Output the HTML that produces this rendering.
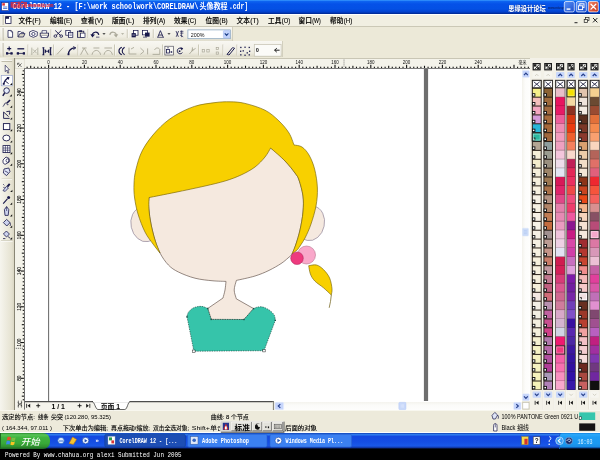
<!DOCTYPE html>
<html lang="zh-CN">
<head>
<meta charset="utf-8">
<title>CorelDRAW 12 - [F:\work schoolwork\CORELDRAW\头像教程.cdr]</title>
<style>
html,body{margin:0;padding:0;background:#000;}
body{width:600px;height:460px;overflow:hidden;position:relative;font-family:'Liberation Sans','Noto Sans CJK SC',sans-serif;}
#screen{position:absolute;left:0;top:0;width:600px;height:460px;overflow:hidden;background:#ECE9D8;}
#screen div{position:absolute;box-sizing:border-box;}
svg{display:block;overflow:hidden;will-change:transform;}
svg text{font-family:'Liberation Sans','Noto Sans CJK SC',sans-serif;}
svg text.mono{font-family:'Liberation Mono','Noto Sans CJK SC',monospace;}
#titlebar{left:0;top:0;width:600px;height:13.5px;background:linear-gradient(#3a9cff 0,#0d62f0 1.5px,#0551e8 4px,#0450e4 9px,#0340cc 12px,#002c9c 13.5px);}
#menubar{left:0;top:13.5px;width:600px;height:13.5px;background:#f1efe2;border-top:1px solid #fff;border-bottom:1px solid #cbc8b6;}
#tb1{left:0;top:27px;width:600px;height:14.3px;background:#ece9d8;}
#tb1 .bar{left:0;top:0;width:233.4px;height:14.3px;background:linear-gradient(#f8f7f2,#efede2 70%,#e0ddcc);border-right:1px solid #d2cfbd;}
#tb2{left:0;top:41.3px;width:600px;height:16.7px;background:#ece9d8;}
#tb2 .bar{left:0;top:0;width:283px;height:16px;background:linear-gradient(#f8f7f2,#efede2 70%,#dcd9c7);border-right:1px solid #d2cfbd;}
#toolbox{left:0;top:58px;width:15px;height:352px;background:linear-gradient(90deg,#f6f5ee,#e6e3d2 75%,#d6d2bf);}
#rulerh{left:15px;top:58px;width:515px;height:11px;background:#f4f3ea;border-top:1px solid #c9c6b5;}
#rulerv{left:15px;top:69px;width:10px;height:341px;background:#f4f3ea;}
#canvas{left:25px;top:69px;width:497px;height:332.5px;background:#fff;}
#vscroll{left:522px;top:69px;width:8px;height:332px;background:linear-gradient(90deg,#f3f2ec,#fcfcfa 40%,#fefefd);}
#pagenav{left:25px;top:401.5px;width:250px;height:8.5px;background:#f4f3ec;}
#hscroll{left:275px;top:401.5px;width:247px;height:8.5px;background:linear-gradient(#f4f3ee,#fbfbf9 40%,#fdfdfc);}
#palette{left:530px;top:58px;width:70px;height:352px;background:#f3f1e8;}
#status{left:0;top:410px;width:600px;height:23.3px;background:#edeadb;border-bottom:1px solid #fbfdfd;}
#taskbar{left:0;top:433.3px;width:600px;height:15.7px;background:linear-gradient(#0f3fb2 0,#2f7df0 1.6px,#1449e0 3.5px,#154ee3 9px,#1a58e8 13px,#0e2f92 15px,#040818 15.7px);}
#tray{left:558.5px;top:0;width:41.5px;height:15.7px;background:linear-gradient(#1282dc 0,#2aa8fa 1.6px,#1d9cf4 4px,#1b98f0 11px,#1a8ee6 13.5px,#0a4a9a 15px,#040818 15.7px);border-left:1px solid #1560c0;border-radius:3px 0 0 0;}
#start{left:0;top:0;width:49.5px;height:15.7px;background:linear-gradient(#2c8a30 0,#58c458 1.8px,#40b440 4.5px,#38a838 10.5px,#2f922f 13.5px,#1f6a24 15.7px);border-radius:0 7px 7px 0;border-left:1px solid #1f6a24;}
#footer{left:0;top:449px;width:600px;height:11px;background:#000;}
#overlay{left:0;top:0;width:600px;height:460px;}
</style>
</head>
<body>
<div id="screen">

<div id="titlebar"></div>
<div id="menubar"></div>
<div id="tb1"><div class="bar"></div></div>
<div id="tb2"><div class="bar"></div></div>
<div id="toolbox"></div>
<div id="rulerh"></div>
<div id="rulerv"></div>
<div id="canvas"></div>
<div id="vscroll"></div>
<div id="pagenav"></div>
<div id="hscroll"></div>
<div id="palette"></div>
<div id="status"></div>
<div id="taskbar"><div id="start"></div><div id="tray"></div></div>
<div id="footer"></div>
<svg class="title" style="position:absolute;left:0px;top:0px" width="600" height="14" viewBox="0 0 600 14">
<rect x="1.6" y="2.6" width="7" height="8" fill="#fff" stroke="#1a2a80" stroke-width="0.6"/><rect x="2.3" y="3.2" width="2.6" height="2.4" fill="#d33"/><rect x="3.1" y="6.6" width="4.2" height="0.8" fill="#3a6ad0"/><rect x="3.1" y="8.2" width="4.2" height="0.8" fill="#3a6ad0"/>
<text x="12.4" y="9.4" font-size="8.2" fill="#fff" textLength="186" lengthAdjust="spacingAndGlyphs" font-weight="bold" class="mono">CorelDRAW 12 - [F:\work schoolwork\CORELDRAW\</text>
<text x="199.4" y="9.4" font-size="7.6" fill="#fff" textLength="28.2" lengthAdjust="spacingAndGlyphs" font-weight="bold" class="mono">头像教程</text>
<text x="229" y="9.4" font-size="8.2" fill="#fff" textLength="19" lengthAdjust="spacingAndGlyphs" font-weight="bold" class="mono">.cdr]</text>
<text x="10.5" y="6.6" font-size="6" fill="#f0282c" textLength="43" lengthAdjust="spacingAndGlyphs" font-weight="900" stroke="#f0282c" stroke-width="0.2" opacity="0.92">网页教学网 www.webjx.com</text>
<text x="508.3" y="10.5" font-size="7" fill="#eef3ff" textLength="37.5" lengthAdjust="spacingAndGlyphs" font-weight="900" stroke="#0a2f8c" stroke-width="0.45" paint-order="stroke">思缘设计论坛</text>
<text x="548" y="9.2" font-size="3.6" fill="#0a2470" textLength="27" lengthAdjust="spacingAndGlyphs" font-weight="bold">www.missyuan.com</text>
<defs><linearGradient id="gb" x1="0" y1="0" x2="1" y2="1"><stop offset="0" stop-color="#5c94f6"/><stop offset="1" stop-color="#1c4fd0"/></linearGradient><linearGradient id="gr" x1="0" y1="0" x2="1" y2="1"><stop offset="0" stop-color="#f08a6a"/><stop offset="1" stop-color="#c8321a"/></linearGradient></defs>
<rect x="564.3" y="1.5" width="10" height="10.4" rx="1.6" fill="url(#gb)" stroke="#fff" stroke-width="0.7"/>
<rect x="566.6" y="8.4" width="3.8" height="1.4" fill="#fff"/>
<rect x="576.3" y="1.5" width="10" height="10.4" rx="1.6" fill="url(#gb)" stroke="#fff" stroke-width="0.7"/>
<rect x="579.8" y="3.8" width="4.2" height="3.8" fill="none" stroke="#fff" stroke-width="0.9"/><rect x="578.4" y="5.8" width="4.2" height="3.8" fill="#2a5fd8" stroke="#fff" stroke-width="0.9"/>
<rect x="588.3" y="1.5" width="10" height="10.4" rx="1.6" fill="url(#gr)" stroke="#fff" stroke-width="0.7"/>
<path d="M591 4.3 L595.8 9.1 M595.8 4.3 L591 9.1" stroke="#fff" stroke-width="1.3" stroke-linecap="round"/>
</svg>
<svg class="menu" style="position:absolute;left:0px;top:13px" width="600" height="14" viewBox="0 13 600 14">
<rect x="1.8" y="15.0" width="0.8" height="10.0" fill="#fff"/><rect x="2.6" y="15.0" width="0.9" height="10.0" fill="#b3b09d"/>
<rect x="5.6" y="16.6" width="5.4" height="6.8" fill="#fff" stroke="#1b1b4a" stroke-width="0.8"/><rect x="5.6" y="16.6" width="3.4" height="2.2" fill="#1b1b4a"/>
<text x="18.5" y="22.8" font-size="7.2" fill="#000" textLength="13.4" lengthAdjust="spacingAndGlyphs" font-weight="500" stroke="#000" stroke-width="0.15">文件</text>
<text x="32.3" y="22.6" font-size="6.4" fill="#000" textLength="8.4" lengthAdjust="spacingAndGlyphs" stroke="#000" stroke-width="0.12">(F)</text>
<text x="50" y="22.8" font-size="7.2" fill="#000" textLength="13.4" lengthAdjust="spacingAndGlyphs" font-weight="500" stroke="#000" stroke-width="0.15">编辑</text>
<text x="63.8" y="22.6" font-size="6.4" fill="#000" textLength="8.4" lengthAdjust="spacingAndGlyphs" stroke="#000" stroke-width="0.12">(E)</text>
<text x="81" y="22.8" font-size="7.2" fill="#000" textLength="13.4" lengthAdjust="spacingAndGlyphs" font-weight="500" stroke="#000" stroke-width="0.15">查看</text>
<text x="94.8" y="22.6" font-size="6.4" fill="#000" textLength="8.4" lengthAdjust="spacingAndGlyphs" stroke="#000" stroke-width="0.12">(V)</text>
<text x="112" y="22.8" font-size="7.2" fill="#000" textLength="13.4" lengthAdjust="spacingAndGlyphs" font-weight="500" stroke="#000" stroke-width="0.15">版面</text>
<text x="125.8" y="22.6" font-size="6.4" fill="#000" textLength="8.4" lengthAdjust="spacingAndGlyphs" stroke="#000" stroke-width="0.12">(L)</text>
<text x="143" y="22.8" font-size="7.2" fill="#000" textLength="13.4" lengthAdjust="spacingAndGlyphs" font-weight="500" stroke="#000" stroke-width="0.15">排列</text>
<text x="156.8" y="22.6" font-size="6.4" fill="#000" textLength="8.4" lengthAdjust="spacingAndGlyphs" stroke="#000" stroke-width="0.12">(A)</text>
<text x="174" y="22.8" font-size="7.2" fill="#000" textLength="13.4" lengthAdjust="spacingAndGlyphs" font-weight="500" stroke="#000" stroke-width="0.15">效果</text>
<text x="187.8" y="22.6" font-size="6.4" fill="#000" textLength="8.4" lengthAdjust="spacingAndGlyphs" stroke="#000" stroke-width="0.12">(C)</text>
<text x="205.5" y="22.8" font-size="7.2" fill="#000" textLength="13.4" lengthAdjust="spacingAndGlyphs" font-weight="500" stroke="#000" stroke-width="0.15">位图</text>
<text x="219.3" y="22.6" font-size="6.4" fill="#000" textLength="8.4" lengthAdjust="spacingAndGlyphs" stroke="#000" stroke-width="0.12">(B)</text>
<text x="236.5" y="22.8" font-size="7.2" fill="#000" textLength="13.4" lengthAdjust="spacingAndGlyphs" font-weight="500" stroke="#000" stroke-width="0.15">文本</text>
<text x="250.3" y="22.6" font-size="6.4" fill="#000" textLength="8.4" lengthAdjust="spacingAndGlyphs" stroke="#000" stroke-width="0.12">(T)</text>
<text x="268" y="22.8" font-size="7.2" fill="#000" textLength="13.4" lengthAdjust="spacingAndGlyphs" font-weight="500" stroke="#000" stroke-width="0.15">工具</text>
<text x="281.8" y="22.6" font-size="6.4" fill="#000" textLength="8.4" lengthAdjust="spacingAndGlyphs" stroke="#000" stroke-width="0.12">(O)</text>
<text x="298.5" y="22.8" font-size="7.2" fill="#000" textLength="13.4" lengthAdjust="spacingAndGlyphs" font-weight="500" stroke="#000" stroke-width="0.15">窗口</text>
<text x="312.3" y="22.6" font-size="6.4" fill="#000" textLength="8.4" lengthAdjust="spacingAndGlyphs" stroke="#000" stroke-width="0.12">(W)</text>
<text x="330" y="22.8" font-size="7.2" fill="#000" textLength="13.4" lengthAdjust="spacingAndGlyphs" font-weight="500" stroke="#000" stroke-width="0.15">帮助</text>
<text x="343.8" y="22.6" font-size="6.4" fill="#000" textLength="8.4" lengthAdjust="spacingAndGlyphs" stroke="#000" stroke-width="0.12">(H)</text>
<rect x="574.5" y="22.2" width="3" height="1" fill="#222"/>
<rect x="585.6" y="17.6" width="3.4" height="3" fill="none" stroke="#222" stroke-width="0.7"/><rect x="584.2" y="19.4" width="3.4" height="3" fill="#f1efe2" stroke="#222" stroke-width="0.7"/>
<path d="M593 18 L597.4 22.4 M597.4 18 L593 22.4" stroke="#222" stroke-width="1"/>
</svg>
<svg class="tb1" style="position:absolute;left:0px;top:27px" width="600" height="14" viewBox="0 27 600 14">
<rect x="1.8" y="28.0" width="0.8" height="12.5" fill="#fff"/><rect x="2.6" y="28.0" width="0.9" height="12.5" fill="#b3b09d"/>
<g transform="translate(0 33.9) scale(1 0.88) translate(0 -34.3)">
<path d="M8 30.4 H11 L12.6 32 V38.2 H8 Z" fill="#fff" stroke="#17174a" stroke-width="0.8"/><path d="M11 30.4 V32 H12.6" fill="none" stroke="#17174a" stroke-width="0.6"/>
<path d="M18 37.8 V31.6 H20.4 L21.2 32.6 H23.6 V34" fill="#fff" stroke="#17174a" stroke-width="0.8"/><path d="M18 37.8 L19.8 34 H25 L23.4 37.8 Z" fill="#d9d6c6" stroke="#17174a" stroke-width="0.8"/>
<path d="M29.6 32 L33 30.4 L37.4 32.2 L37.2 36.4 L33.4 38.2 L29.6 36.4 Z" fill="#fff" stroke="#17174a" stroke-width="0.8"/><circle cx="33.4" cy="34.4" r="1.7" fill="none" stroke="#17174a" stroke-width="0.8"/>
<path d="M42 33.4 V30.6 H46.6 V33.4" fill="#fff" stroke="#17174a" stroke-width="0.7"/><rect x="40.2" y="33.4" width="8.4" height="3.4" fill="#e8e6da" stroke="#17174a" stroke-width="0.8"/><path d="M41.6 36.8 L41 38.4 H47.8 L47.2 36.8" fill="#fff" stroke="#17174a" stroke-width="0.7"/>
<rect x="50.5" y="29" width="1" height="10" fill="#c5c2b0"/><rect x="51.5" y="29" width="0.6" height="10" fill="#fff"/>
<path d="M55.2 30.4 L60.4 36 M61.4 30.4 L56.2 36" stroke="#17174a" stroke-width="1"/><circle cx="55.4" cy="36.8" r="1.4" fill="none" stroke="#17174a" stroke-width="0.9"/><circle cx="61.2" cy="36.8" r="1.4" fill="none" stroke="#17174a" stroke-width="0.9"/>
<rect x="65.8" y="30.4" width="4.4" height="5.4" fill="#fff" stroke="#17174a" stroke-width="0.8"/><rect x="68.4" y="32.6" width="4.4" height="5.6" fill="#fff" stroke="#17174a" stroke-width="0.8"/><path d="M69.4 34.4 H71.8 M69.4 36 H71.8" stroke="#17174a" stroke-width="0.5"/>
<rect x="77.4" y="31.2" width="6.4" height="7" fill="#d9d6c6" stroke="#17174a" stroke-width="0.8"/><rect x="79.2" y="30.2" width="2.8" height="1.8" fill="#17174a"/><rect x="80.4" y="33.4" width="4.6" height="4.8" fill="#fff" stroke="#17174a" stroke-width="0.7"/>
<rect x="87.5" y="29" width="1" height="10" fill="#c5c2b0"/><rect x="88.5" y="29" width="0.6" height="10" fill="#fff"/>
<path d="M92.2 36.6 C92 32 97.6 30.4 98.8 35.4" fill="none" stroke="#17174a" stroke-width="1.2"/><path d="M90.4 34.6 L92.4 38.4 L95 35 Z" fill="#17174a"/><path d="M96 38 H99.4" stroke="#17174a" stroke-width="0.7"/>
<path d="M102.4 33.6 L105.6 33.6 L104 35.4 Z" fill="#222"/>
<path d="M116.4 36.6 C116.6 32 111 30.4 109.8 35.4" fill="none" stroke="#aaa899" stroke-width="1.2"/><path d="M118.2 34.6 L116.2 38.4 L113.6 35 Z" fill="#aaa899"/>
<path d="M121.0 33.6 L124.19999999999999 33.6 L122.6 35.4 Z" fill="#aaa899"/>
<rect x="126.8" y="29" width="1" height="10" fill="#c5c2b0"/><rect x="127.8" y="29" width="0.6" height="10" fill="#fff"/>
<rect x="133.4" y="30.4" width="4.6" height="5.4" fill="#fff" stroke="#17174a" stroke-width="0.8"/><rect x="131.6" y="33.4" width="4.2" height="4.8" fill="#17174a"/><path d="M132.4 35.6 H135" stroke="#fff" stroke-width="0.6"/>
<rect x="142.4" y="30.6" width="5" height="4.8" fill="#fff" stroke="#17174a" stroke-width="0.8"/><rect x="145" y="32.8" width="4.6" height="4.6" fill="#17174a"/><path d="M143 38 H147" stroke="#17174a" stroke-width="0.7"/>
<rect x="152.8" y="29" width="1" height="10" fill="#c5c2b0"/><rect x="153.8" y="29" width="0.6" height="10" fill="#fff"/>
<path d="M157.8 38 L160.4 30.6 L163.2 38 M158.8 35.6 H162.2" fill="none" stroke="#17174a" stroke-width="0.9"/><path d="M157.2 38.2 H164" stroke="#17174a" stroke-width="0.7"/>
<path d="M167.4 33.6 L170.6 33.6 L169 35.4 Z" fill="#222"/>
<path d="M176 31 L178.4 37.6 M178.6 31 L176.2 37.6" stroke="#17174a" stroke-width="0.8"/><path d="M180 31.4 H183.4 M180 33.4 H183.4 M181.6 30.4 V38 M180 35.6 L183.2 37.6" stroke="#17174a" stroke-width="0.7" fill="none"/>
</g>
<rect x="187.9" y="29.9" width="42.4" height="8.8" fill="#fff" stroke="#7f9db9" stroke-width="0.7"/>
<text x="190.8" y="36.6" font-size="5.8" fill="#111" textLength="13.6" lengthAdjust="spacingAndGlyphs">200%</text>
<rect x="223.4" y="30.6" width="6.4" height="7.4" rx="0.8" fill="#c3d3fb" stroke="#9db4ee" stroke-width="0.5"/><path d="M224.8 33.4 L226.6 35.4 L228.4 33.4" fill="none" stroke="#1d3f8a" stroke-width="1.1"/>
</svg>
<svg class="tb2" style="position:absolute;left:0px;top:41px" width="600" height="17" viewBox="0 41 600 17">
<rect x="1.8" y="43.0" width="0.8" height="13.5" fill="#fff"/><rect x="2.6" y="43.0" width="0.9" height="13.5" fill="#b3b09d"/>
<path d="M9.2 46.6 V50.6 M7.2 48.6 H11.2" stroke="#17174a" stroke-width="1.1"/><path d="M6 53.4 H12.6" stroke="#17174a" stroke-width="0.8"/><rect x="6" y="52.2" width="2.2" height="2.4" fill="#17174a"/><rect x="10.4" y="52.2" width="2.2" height="2.4" fill="#17174a"/>
<path d="M17.4 48.8 H24.2" stroke="#17174a" stroke-width="1.3"/><path d="M16.8 53.4 H25" stroke="#17174a" stroke-width="0.8"/><rect x="16.8" y="52.2" width="2.2" height="2.4" fill="#17174a"/><rect x="22.8" y="52.2" width="2.2" height="2.4" fill="#17174a"/>
<rect x="27.5" y="44.5" width="1" height="11.0" fill="#c5c2b0"/><rect x="28.5" y="44.5" width="0.6" height="11.0" fill="#fff"/>
<path d="M31.8 47.6 V55 M37.8 47.6 V55" stroke="#aaa899" stroke-width="0.8"/><path d="M33 49.4 L34.8 51.3 L33 53.2 M36.6 49.4 L34.8 51.3 L36.6 53.2" fill="none" stroke="#aaa899" stroke-width="0.8"/>
<path d="M43.4 47.6 V55 M50.6 47.6 V55" stroke="#17174a" stroke-width="1.1"/><path d="M44.6 48.8 L47 51.3 L44.6 53.8 Z M49.4 48.8 L47 51.3 L49.4 53.8 Z" fill="#17174a"/><path d="M42.4 47.8 H44.4 M49.6 47.8 H51.6 M42.4 54.8 H44.4 M49.6 54.8 H51.6" stroke="#17174a" stroke-width="0.9"/>
<rect x="53.2" y="44.5" width="1" height="11.0" fill="#c5c2b0"/><rect x="54.2" y="44.5" width="0.6" height="11.0" fill="#fff"/>
<path d="M57 54.4 L63.2 47.6" stroke="#aaa899" stroke-width="0.9"/>
<path d="M68.4 54.6 C68.6 50 71 48 75 47.8" fill="none" stroke="#17174a" stroke-width="1.3"/><path d="M73 46.6 L76 47.8 L73.4 49.6" fill="none" stroke="#17174a" stroke-width="0.8"/><rect x="67.6" y="53.4" width="1.8" height="1.8" fill="#17174a"/>
<rect x="77.5" y="44.5" width="1" height="11.0" fill="#c5c2b0"/><rect x="78.5" y="44.5" width="0.6" height="11.0" fill="#fff"/>
<path d="M80.6 54.8 L84.2 48 L88 54.8 M82 48 L84.2 48 L86.6 48" fill="none" stroke="#aaa899" stroke-width="0.9"/>
<path d="M92 54.8 C93 49 99.6 49 100.6 54.8 M93.4 48 H99.4" fill="none" stroke="#aaa899" stroke-width="0.9"/>
<path d="M104 54.8 C105 49 111.4 49 112.4 54.8 M104.4 48 H112" fill="none" stroke="#aaa899" stroke-width="0.9"/>
<rect x="114.1" y="44.5" width="1" height="11.0" fill="#c5c2b0"/><rect x="115.1" y="44.5" width="0.6" height="11.0" fill="#fff"/>
<path d="M121.8 47.2 C118 48.6 118 53.2 121.8 54.8 M124.6 47.2 C121.4 49 121.4 53 124.6 54.8" fill="none" stroke="#17174a" stroke-width="1.1"/>
<path d="M129 47.6 V54 H136.4 M131 49 L134 47.4" fill="none" stroke="#aaa899" stroke-width="0.9"/>
<path d="M140.4 48 L144 51.4 L140.4 54.4 M147.6 48.4 V54.4" fill="none" stroke="#aaa899" stroke-width="0.9"/>
<path d="M152.6 54.4 H159.8 V49.4 C158.4 47.2 155.4 47.6 154.6 50" fill="none" stroke="#aaa899" stroke-width="0.9"/>
<rect x="162.2" y="44.5" width="1" height="11.0" fill="#c5c2b0"/><rect x="163.2" y="44.5" width="0.6" height="11.0" fill="#fff"/>
<rect x="164.9" y="46.2" width="8.6" height="8.8" fill="#f8f7f2" stroke="#3a3a4a" stroke-width="0.6"/><rect x="166.4" y="49.6" width="3" height="3.4" fill="none" stroke="#17174a" stroke-width="0.8"/><path d="M167.2 47.8 H168.8 M170.4 52 H172.4 M171.4 51 V53" stroke="#17174a" stroke-width="0.7"/>
<path d="M181.8 49 C179.6 47 176.8 49 177.4 51.6 C178 54 181 54.4 182.4 52.6" fill="none" stroke="#17174a" stroke-width="1"/><path d="M180.4 47 L183.2 48.2 L181.6 50.6 Z" fill="#17174a"/><rect x="178.8" y="50.4" width="1.6" height="1.6" fill="#17174a"/>
<path d="M189.4 54 L192.4 50.4 L195.6 48.4 M192.4 50.4 V47.4" fill="none" stroke="#aaa899" stroke-width="0.9"/><rect x="191.6" y="49.6" width="1.6" height="1.6" fill="#aaa899"/>
<rect x="198.2" y="44.5" width="1" height="11.0" fill="#c5c2b0"/><rect x="199.2" y="44.5" width="0.6" height="11.0" fill="#fff"/>
<rect x="202.2" y="49.6" width="2.4" height="2.4" fill="none" stroke="#aaa899" stroke-width="0.7"/><rect x="206.8" y="49.6" width="2.4" height="2.4" fill="none" stroke="#aaa899" stroke-width="0.7"/>
<rect x="216.2" y="47.4" width="2.2" height="2.2" fill="none" stroke="#aaa899" stroke-width="0.7"/><rect x="216.2" y="52" width="2.2" height="2.2" fill="none" stroke="#aaa899" stroke-width="0.7"/>
<rect x="222.5" y="44.5" width="1" height="11.0" fill="#c5c2b0"/><rect x="223.5" y="44.5" width="0.6" height="11.0" fill="#fff"/>
<path d="M227 54.4 L232.6 47.6 M229 55 L234.6 48.2" stroke="#17174a" stroke-width="1"/><path d="M227 54.4 L229 55 M232.6 47.6 L234.6 48.2" stroke="#17174a" stroke-width="0.8"/>
<rect x="236.5" y="44.5" width="1" height="11.0" fill="#c5c2b0"/><rect x="237.5" y="44.5" width="0.6" height="11.0" fill="#fff"/>
<rect x="240.2" y="46.8" width="1.3" height="1.3" fill="#17174a"/>
<rect x="244.4" y="46.6" width="1.3" height="1.3" fill="#17174a"/>
<rect x="248.6" y="46.8" width="1.3" height="1.3" fill="#17174a"/>
<rect x="240" y="50.6" width="1.3" height="1.3" fill="#17174a"/>
<rect x="249" y="50.6" width="1.3" height="1.3" fill="#17174a"/>
<rect x="242.6" y="50.2" width="1.3" height="1.3" fill="#17174a"/>
<rect x="246.6" y="52.2" width="1.3" height="1.3" fill="#17174a"/>
<rect x="240.2" y="54.2" width="1.3" height="1.3" fill="#17174a"/>
<rect x="244.4" y="54.6" width="1.3" height="1.3" fill="#17174a"/>
<rect x="248.6" y="54.2" width="1.3" height="1.3" fill="#17174a"/>
<rect x="254.3" y="44.6" width="26.8" height="11.6" fill="#fbfbf8" stroke="#c4c1b0" stroke-width="0.7"/>
<text x="255.8" y="52.3" font-size="5.6" fill="#111" font-weight="bold">0</text>
<path d="M274.6 50.2 H279.6 M274.6 50.2 L276.8 48.2 M274.6 50.2 L276.8 52.2" stroke="#222" stroke-width="1" fill="none"/>
</svg>
<svg class="toolbox" style="position:absolute;left:0px;top:58px" width="15" height="352" viewBox="0 58 15 352">
<rect x="14" y="58" width="0.9" height="352" fill="#807d6d"/>
<rect x="1.5" y="60.4" width="10.6" height="0.8" fill="#fff"/><rect x="1.5" y="61.2" width="10.6" height="0.8" fill="#b3b09d"/>
<path d="M5.2 65.2 L5.2 71.6 L6.7 70.3 L7.8 73.2 L8.8 72.8 L7.7 70 L9.4 69.8 Z" fill="#fff" stroke="#17174a" stroke-width="0.65"/>
<rect x="1.2" y="75.6" width="11.4" height="10.2" fill="#fff" stroke="#8a98c8" stroke-width="0.6"/>
<path d="M3.6 84.2 C4.4 80.6 6.2 78.8 8.8 77.6" fill="none" stroke="#17174a" stroke-width="1.2"/><path d="M6.6 77 L9.6 77.2 L8.4 80 Z" fill="#17174a"/><path d="M5.2 81 L8.6 83.6" stroke="#17174a" stroke-width="0.9"/><rect x="2.8" y="83" width="1.8" height="1.8" fill="#17174a"/>
<path d="M10.0 85 L12.200000000000001 85 L12.200000000000001 82.8 Z" fill="#111"/>
<circle cx="6.6" cy="90.6" r="2.8" fill="#e8eefc" stroke="#17174a" stroke-width="0.9"/><path d="M4.6 93 L2.8 95.8" stroke="#17174a" stroke-width="1.4"/>
<path d="M9.6 96.4 L11.8 96.4 L11.8 94.2 Z" fill="#111"/>
<path d="M3 106.6 C4.6 104.8 4.6 102.6 6.2 102.8 C7.6 103 6.4 105.6 8.4 104.6" fill="none" stroke="#17174a" stroke-width="0.8"/><path d="M6.4 102.4 L9.6 99.6 L10.6 100.6 L7.6 103.6 Z" fill="#17174a"/>
<path d="M10.0 107.8 L12.200000000000001 107.8 L12.200000000000001 105.6 Z" fill="#111"/>
<path d="M3.6 112 V118.4 H9.6 M3.6 112 L8.6 116.6" fill="none" stroke="#17174a" stroke-width="0.9"/><path d="M6.4 111.6 L10 111.2 L9.4 114.6" fill="none" stroke="#17174a" stroke-width="0.9"/>
<path d="M10.0 119.6 L12.200000000000001 119.6 L12.200000000000001 117.39999999999999 Z" fill="#111"/>
<rect x="3.4" y="123.6" width="6.4" height="6" fill="#fff" stroke="#17174a" stroke-width="0.9"/>
<path d="M10.0 131.2 L12.200000000000001 131.2 L12.200000000000001 129.0 Z" fill="#111"/>
<ellipse cx="6.4" cy="138" rx="3.6" ry="2.9" fill="#fff" stroke="#17174a" stroke-width="0.9"/>
<path d="M10.0 142.6 L12.200000000000001 142.6 L12.200000000000001 140.4 Z" fill="#111"/>
<rect x="3" y="145.6" width="7" height="7" fill="#fff" stroke="#17174a" stroke-width="0.8"/><path d="M3 148 H10 M3 150.2 H10 M5.4 145.6 V152.6 M7.6 145.6 V152.6" stroke="#17174a" stroke-width="0.6"/>
<path d="M10.0 154.2 L12.200000000000001 154.2 L12.200000000000001 152.0 Z" fill="#111"/>
<path d="M3 160 L6 157 L9 158.4 L8.6 162.4 L5 164.4 L3 162.8 Z" fill="#fff" stroke="#17174a" stroke-width="0.8"/><circle cx="7.8" cy="160.6" r="1.8" fill="none" stroke="#17174a" stroke-width="0.7"/>
<path d="M10.0 165.8 L12.200000000000001 165.8 L12.200000000000001 163.60000000000002 Z" fill="#111"/>
<path d="M4 169 L8.8 168 L10 171.6 L6.6 175.6 L3.4 173 Z" fill="#dfe4f6" stroke="#17174a" stroke-width="0.8"/><path d="M5 171 L8 172.6" stroke="#17174a" stroke-width="0.7"/>
<path d="M3 190.6 L6.4 186.4 L8.4 188 L5.2 191.4 Z" fill="#cdd3ee" stroke="#17174a" stroke-width="0.7"/><path d="M6.6 186 L9 183.2 L10.4 184.4 L8.2 187.2 Z" fill="#17174a"/><path d="M3 184 L4.4 185.4 M3.2 187.4 H4.8" stroke="#17174a" stroke-width="0.6"/>
<path d="M10.2 192 L12.4 192 L12.4 189.8 Z" fill="#111"/>
<path d="M3.2 203.6 L7.4 198.8" stroke="#17174a" stroke-width="1.1"/><circle cx="8.6" cy="197.4" r="1.5" fill="#17174a"/>
<path d="M10.0 204.8 L12.200000000000001 204.8 L12.200000000000001 202.60000000000002 Z" fill="#111"/>
<path d="M5 215.4 L4.4 209.6 L6.6 206.6 L8.8 209.6 L8.2 215.4 Z" fill="#cdd3ee" stroke="#17174a" stroke-width="0.8"/><path d="M6.6 206.6 V211" stroke="#17174a" stroke-width="0.6"/>
<path d="M10.0 216.4 L12.200000000000001 216.4 L12.200000000000001 214.20000000000002 Z" fill="#111"/>
<path d="M3.4 222.6 L6.6 219.4 L10 222.6 L6.8 226 Z" fill="#cdd3ee" stroke="#17174a" stroke-width="0.8"/><path d="M10 222.6 C10.8 224 10.6 225.4 9.8 226" fill="none" stroke="#17174a" stroke-width="0.8"/>
<path d="M10.0 227.8 L12.200000000000001 227.8 L12.200000000000001 225.60000000000002 Z" fill="#111"/>
<path d="M3.4 234 L6.4 231 L9.4 234 L6.6 237 Z" fill="#cdd3ee" stroke="#17174a" stroke-width="0.8"/><path d="M8 236.6 L10.4 238.4 M3 238.6 H5.4" stroke="#17174a" stroke-width="0.8"/>
<path d="M10.0 239.4 L12.200000000000001 239.4 L12.200000000000001 237.20000000000002 Z" fill="#111"/>
<rect x="1" y="240.4" width="11.6" height="0.6" fill="#c9c6b4"/><rect x="1" y="241" width="11.6" height="0.6" fill="#fff"/><rect x="1.6" y="178.6" width="10.4" height="0.6" fill="#c9c6b4"/><rect x="1.6" y="179.2" width="10.4" height="0.6" fill="#fff"/>
</svg>
<svg class="rulerh" style="position:absolute;left:14px;top:58px" width="516" height="12" viewBox="14 58 516 12">
<rect x="15.2" y="59" width="9" height="9.4" fill="#f4f3ea" stroke="#d4d1c0" stroke-width="0.5"/>
<path d="M18 63.4 L21.6 67 M21.6 63.4 L18 67 M17.6 63.2 H19.4 M17.6 63.2 V65" stroke="#222" stroke-width="0.6" fill="none"/>
<rect x="24" y="68" width="506" height="0.9" fill="#707070"/>
<rect x="26.57" y="66.7" width="1.1" height="1.3" fill="#111"/>
<rect x="30.15" y="65.8" width="1.1" height="2.2" fill="#111"/>
<rect x="33.73" y="66.7" width="1.1" height="1.3" fill="#111"/>
<rect x="37.31" y="66.7" width="1.1" height="1.3" fill="#111"/>
<rect x="40.89" y="66.7" width="1.1" height="1.3" fill="#111"/>
<rect x="44.47" y="66.7" width="1.1" height="1.3" fill="#111"/>
<rect x="48.05" y="64.8" width="1.1" height="3.2" fill="#111"/>
<rect x="51.63" y="66.7" width="1.1" height="1.3" fill="#111"/>
<rect x="55.21" y="66.7" width="1.1" height="1.3" fill="#111"/>
<rect x="58.79" y="66.7" width="1.1" height="1.3" fill="#111"/>
<rect x="62.37" y="66.7" width="1.1" height="1.3" fill="#111"/>
<rect x="65.95" y="65.8" width="1.1" height="2.2" fill="#111"/>
<rect x="69.53" y="66.7" width="1.1" height="1.3" fill="#111"/>
<rect x="73.11" y="66.7" width="1.1" height="1.3" fill="#111"/>
<rect x="76.69" y="66.7" width="1.1" height="1.3" fill="#111"/>
<rect x="80.27" y="66.7" width="1.1" height="1.3" fill="#111"/>
<rect x="83.85" y="64.8" width="1.1" height="3.2" fill="#111"/>
<rect x="87.43" y="66.7" width="1.1" height="1.3" fill="#111"/>
<rect x="91.01" y="66.7" width="1.1" height="1.3" fill="#111"/>
<rect x="94.59" y="66.7" width="1.1" height="1.3" fill="#111"/>
<rect x="98.17" y="66.7" width="1.1" height="1.3" fill="#111"/>
<rect x="101.75" y="65.8" width="1.1" height="2.2" fill="#111"/>
<rect x="105.33" y="66.7" width="1.1" height="1.3" fill="#111"/>
<rect x="108.91" y="66.7" width="1.1" height="1.3" fill="#111"/>
<rect x="112.49" y="66.7" width="1.1" height="1.3" fill="#111"/>
<rect x="116.07" y="66.7" width="1.1" height="1.3" fill="#111"/>
<rect x="119.65" y="64.8" width="1.1" height="3.2" fill="#111"/>
<rect x="123.23" y="66.7" width="1.1" height="1.3" fill="#111"/>
<rect x="126.81" y="66.7" width="1.1" height="1.3" fill="#111"/>
<rect x="130.39" y="66.7" width="1.1" height="1.3" fill="#111"/>
<rect x="133.97" y="66.7" width="1.1" height="1.3" fill="#111"/>
<rect x="137.55" y="65.8" width="1.1" height="2.2" fill="#111"/>
<rect x="141.13" y="66.7" width="1.1" height="1.3" fill="#111"/>
<rect x="144.71" y="66.7" width="1.1" height="1.3" fill="#111"/>
<rect x="148.29" y="66.7" width="1.1" height="1.3" fill="#111"/>
<rect x="151.87" y="66.7" width="1.1" height="1.3" fill="#111"/>
<rect x="155.45" y="64.8" width="1.1" height="3.2" fill="#111"/>
<rect x="159.03" y="66.7" width="1.1" height="1.3" fill="#111"/>
<rect x="162.61" y="66.7" width="1.1" height="1.3" fill="#111"/>
<rect x="166.19" y="66.7" width="1.1" height="1.3" fill="#111"/>
<rect x="169.77" y="66.7" width="1.1" height="1.3" fill="#111"/>
<rect x="173.35" y="65.8" width="1.1" height="2.2" fill="#111"/>
<rect x="176.93" y="66.7" width="1.1" height="1.3" fill="#111"/>
<rect x="180.51" y="66.7" width="1.1" height="1.3" fill="#111"/>
<rect x="184.09" y="66.7" width="1.1" height="1.3" fill="#111"/>
<rect x="187.67" y="66.7" width="1.1" height="1.3" fill="#111"/>
<rect x="191.25" y="64.8" width="1.1" height="3.2" fill="#111"/>
<rect x="194.83" y="66.7" width="1.1" height="1.3" fill="#111"/>
<rect x="198.41" y="66.7" width="1.1" height="1.3" fill="#111"/>
<rect x="201.99" y="66.7" width="1.1" height="1.3" fill="#111"/>
<rect x="205.57" y="66.7" width="1.1" height="1.3" fill="#111"/>
<rect x="209.15" y="65.8" width="1.1" height="2.2" fill="#111"/>
<rect x="212.73" y="66.7" width="1.1" height="1.3" fill="#111"/>
<rect x="216.31" y="66.7" width="1.1" height="1.3" fill="#111"/>
<rect x="219.89" y="66.7" width="1.1" height="1.3" fill="#111"/>
<rect x="223.47" y="66.7" width="1.1" height="1.3" fill="#111"/>
<rect x="227.05" y="64.8" width="1.1" height="3.2" fill="#111"/>
<rect x="230.63" y="66.7" width="1.1" height="1.3" fill="#111"/>
<rect x="234.21" y="66.7" width="1.1" height="1.3" fill="#111"/>
<rect x="237.79" y="66.7" width="1.1" height="1.3" fill="#111"/>
<rect x="241.37" y="66.7" width="1.1" height="1.3" fill="#111"/>
<rect x="244.95" y="65.8" width="1.1" height="2.2" fill="#111"/>
<rect x="248.53" y="66.7" width="1.1" height="1.3" fill="#111"/>
<rect x="252.11" y="66.7" width="1.1" height="1.3" fill="#111"/>
<rect x="255.69" y="66.7" width="1.1" height="1.3" fill="#111"/>
<rect x="259.27" y="66.7" width="1.1" height="1.3" fill="#111"/>
<rect x="262.85" y="64.8" width="1.1" height="3.2" fill="#111"/>
<rect x="266.43" y="66.7" width="1.1" height="1.3" fill="#111"/>
<rect x="270.01" y="66.7" width="1.1" height="1.3" fill="#111"/>
<rect x="273.59" y="66.7" width="1.1" height="1.3" fill="#111"/>
<rect x="277.17" y="66.7" width="1.1" height="1.3" fill="#111"/>
<rect x="280.75" y="65.8" width="1.1" height="2.2" fill="#111"/>
<rect x="284.33" y="66.7" width="1.1" height="1.3" fill="#111"/>
<rect x="287.91" y="66.7" width="1.1" height="1.3" fill="#111"/>
<rect x="291.49" y="66.7" width="1.1" height="1.3" fill="#111"/>
<rect x="295.07" y="66.7" width="1.1" height="1.3" fill="#111"/>
<rect x="298.65" y="64.8" width="1.1" height="3.2" fill="#111"/>
<rect x="302.23" y="66.7" width="1.1" height="1.3" fill="#111"/>
<rect x="305.81" y="66.7" width="1.1" height="1.3" fill="#111"/>
<rect x="309.39" y="66.7" width="1.1" height="1.3" fill="#111"/>
<rect x="312.97" y="66.7" width="1.1" height="1.3" fill="#111"/>
<rect x="316.55" y="65.8" width="1.1" height="2.2" fill="#111"/>
<rect x="320.13" y="66.7" width="1.1" height="1.3" fill="#111"/>
<rect x="323.71" y="66.7" width="1.1" height="1.3" fill="#111"/>
<rect x="327.29" y="66.7" width="1.1" height="1.3" fill="#111"/>
<rect x="330.87" y="66.7" width="1.1" height="1.3" fill="#111"/>
<rect x="334.45" y="64.8" width="1.1" height="3.2" fill="#111"/>
<rect x="338.03" y="66.7" width="1.1" height="1.3" fill="#111"/>
<rect x="341.61" y="66.7" width="1.1" height="1.3" fill="#111"/>
<rect x="345.19" y="66.7" width="1.1" height="1.3" fill="#111"/>
<rect x="348.77" y="66.7" width="1.1" height="1.3" fill="#111"/>
<rect x="352.35" y="65.8" width="1.1" height="2.2" fill="#111"/>
<rect x="355.93" y="66.7" width="1.1" height="1.3" fill="#111"/>
<rect x="359.51" y="66.7" width="1.1" height="1.3" fill="#111"/>
<rect x="363.09" y="66.7" width="1.1" height="1.3" fill="#111"/>
<rect x="366.67" y="66.7" width="1.1" height="1.3" fill="#111"/>
<rect x="370.25" y="64.8" width="1.1" height="3.2" fill="#111"/>
<rect x="373.83" y="66.7" width="1.1" height="1.3" fill="#111"/>
<rect x="377.41" y="66.7" width="1.1" height="1.3" fill="#111"/>
<rect x="380.99" y="66.7" width="1.1" height="1.3" fill="#111"/>
<rect x="384.57" y="66.7" width="1.1" height="1.3" fill="#111"/>
<rect x="388.15" y="65.8" width="1.1" height="2.2" fill="#111"/>
<rect x="391.73" y="66.7" width="1.1" height="1.3" fill="#111"/>
<rect x="395.31" y="66.7" width="1.1" height="1.3" fill="#111"/>
<rect x="398.89" y="66.7" width="1.1" height="1.3" fill="#111"/>
<rect x="402.47" y="66.7" width="1.1" height="1.3" fill="#111"/>
<rect x="406.05" y="64.8" width="1.1" height="3.2" fill="#111"/>
<rect x="409.63" y="66.7" width="1.1" height="1.3" fill="#111"/>
<rect x="413.21" y="66.7" width="1.1" height="1.3" fill="#111"/>
<rect x="416.79" y="66.7" width="1.1" height="1.3" fill="#111"/>
<rect x="420.37" y="66.7" width="1.1" height="1.3" fill="#111"/>
<rect x="423.95" y="65.8" width="1.1" height="2.2" fill="#111"/>
<rect x="427.53" y="66.7" width="1.1" height="1.3" fill="#111"/>
<rect x="431.11" y="66.7" width="1.1" height="1.3" fill="#111"/>
<rect x="434.69" y="66.7" width="1.1" height="1.3" fill="#111"/>
<rect x="438.27" y="66.7" width="1.1" height="1.3" fill="#111"/>
<rect x="441.85" y="64.8" width="1.1" height="3.2" fill="#111"/>
<rect x="445.43" y="66.7" width="1.1" height="1.3" fill="#111"/>
<rect x="449.01" y="66.7" width="1.1" height="1.3" fill="#111"/>
<rect x="452.59" y="66.7" width="1.1" height="1.3" fill="#111"/>
<rect x="456.17" y="66.7" width="1.1" height="1.3" fill="#111"/>
<rect x="459.75" y="65.8" width="1.1" height="2.2" fill="#111"/>
<rect x="463.33" y="66.7" width="1.1" height="1.3" fill="#111"/>
<rect x="466.91" y="66.7" width="1.1" height="1.3" fill="#111"/>
<rect x="470.49" y="66.7" width="1.1" height="1.3" fill="#111"/>
<rect x="474.07" y="66.7" width="1.1" height="1.3" fill="#111"/>
<rect x="477.65" y="64.8" width="1.1" height="3.2" fill="#111"/>
<rect x="481.23" y="66.7" width="1.1" height="1.3" fill="#111"/>
<rect x="484.81" y="66.7" width="1.1" height="1.3" fill="#111"/>
<rect x="488.39" y="66.7" width="1.1" height="1.3" fill="#111"/>
<rect x="491.97" y="66.7" width="1.1" height="1.3" fill="#111"/>
<rect x="495.55" y="65.8" width="1.1" height="2.2" fill="#111"/>
<rect x="499.13" y="66.7" width="1.1" height="1.3" fill="#111"/>
<rect x="502.71" y="66.7" width="1.1" height="1.3" fill="#111"/>
<rect x="506.29" y="66.7" width="1.1" height="1.3" fill="#111"/>
<rect x="509.87" y="66.7" width="1.1" height="1.3" fill="#111"/>
<rect x="513.45" y="64.8" width="1.1" height="3.2" fill="#111"/>
<rect x="517.03" y="66.7" width="1.1" height="1.3" fill="#111"/>
<rect x="520.61" y="66.7" width="1.1" height="1.3" fill="#111"/>
<rect x="524.19" y="66.7" width="1.1" height="1.3" fill="#111"/>
<rect x="527.77" y="66.7" width="1.1" height="1.3" fill="#111"/>
<text x="48.6" y="64.2" font-size="4.5" fill="#111" text-anchor="middle">0</text>
<text x="84.4" y="64.2" font-size="4.5" fill="#111" text-anchor="middle">20</text>
<text x="120.2" y="64.2" font-size="4.5" fill="#111" text-anchor="middle">40</text>
<text x="156.0" y="64.2" font-size="4.5" fill="#111" text-anchor="middle">60</text>
<text x="191.8" y="64.2" font-size="4.5" fill="#111" text-anchor="middle">80</text>
<text x="227.6" y="64.2" font-size="4.5" fill="#111" text-anchor="middle">100</text>
<text x="263.4" y="64.2" font-size="4.5" fill="#111" text-anchor="middle">120</text>
<text x="299.2" y="64.2" font-size="4.5" fill="#111" text-anchor="middle">140</text>
<text x="335.0" y="64.2" font-size="4.5" fill="#111" text-anchor="middle">160</text>
<text x="370.8" y="64.2" font-size="4.5" fill="#111" text-anchor="middle">180</text>
<text x="406.6" y="64.2" font-size="4.5" fill="#111" text-anchor="middle">200</text>
<text x="442.4" y="64.2" font-size="4.5" fill="#111" text-anchor="middle">220</text>
<text x="478.2" y="64.2" font-size="4.5" fill="#111" text-anchor="middle">240</text>
<text x="518.6" y="63.9" font-size="4.2" fill="#111" textLength="8" lengthAdjust="spacingAndGlyphs">毫米</text>
<path d="M344 59.6 V67" stroke="#6e6e6e" stroke-width="0.9" stroke-dasharray="1 1"/>
</svg>
<svg class="rulerv" style="position:absolute;left:14px;top:69px" width="11" height="341" viewBox="14 69 11 341">
<rect x="24" y="68" width="0.9" height="341.6" fill="#606060"/>
<rect x="22.7" y="70.30" width="1.3" height="1.1" fill="#111"/>
<rect x="21.8" y="73.88" width="2.2" height="1.1" fill="#111"/>
<rect x="22.7" y="77.45" width="1.3" height="1.1" fill="#111"/>
<rect x="22.7" y="81.02" width="1.3" height="1.1" fill="#111"/>
<rect x="22.7" y="84.60" width="1.3" height="1.1" fill="#111"/>
<rect x="22.7" y="88.17" width="1.3" height="1.1" fill="#111"/>
<rect x="20.8" y="91.75" width="3.2" height="1.1" fill="#111"/>
<rect x="22.7" y="95.33" width="1.3" height="1.1" fill="#111"/>
<rect x="22.7" y="98.90" width="1.3" height="1.1" fill="#111"/>
<rect x="22.7" y="102.48" width="1.3" height="1.1" fill="#111"/>
<rect x="22.7" y="106.05" width="1.3" height="1.1" fill="#111"/>
<rect x="21.8" y="109.62" width="2.2" height="1.1" fill="#111"/>
<rect x="22.7" y="113.20" width="1.3" height="1.1" fill="#111"/>
<rect x="22.7" y="116.78" width="1.3" height="1.1" fill="#111"/>
<rect x="22.7" y="120.35" width="1.3" height="1.1" fill="#111"/>
<rect x="22.7" y="123.92" width="1.3" height="1.1" fill="#111"/>
<rect x="20.8" y="127.50" width="3.2" height="1.1" fill="#111"/>
<rect x="22.7" y="131.07" width="1.3" height="1.1" fill="#111"/>
<rect x="22.7" y="134.65" width="1.3" height="1.1" fill="#111"/>
<rect x="22.7" y="138.22" width="1.3" height="1.1" fill="#111"/>
<rect x="22.7" y="141.80" width="1.3" height="1.1" fill="#111"/>
<rect x="21.8" y="145.38" width="2.2" height="1.1" fill="#111"/>
<rect x="22.7" y="148.95" width="1.3" height="1.1" fill="#111"/>
<rect x="22.7" y="152.52" width="1.3" height="1.1" fill="#111"/>
<rect x="22.7" y="156.10" width="1.3" height="1.1" fill="#111"/>
<rect x="22.7" y="159.67" width="1.3" height="1.1" fill="#111"/>
<rect x="20.8" y="163.25" width="3.2" height="1.1" fill="#111"/>
<rect x="22.7" y="166.82" width="1.3" height="1.1" fill="#111"/>
<rect x="22.7" y="170.40" width="1.3" height="1.1" fill="#111"/>
<rect x="22.7" y="173.97" width="1.3" height="1.1" fill="#111"/>
<rect x="22.7" y="177.55" width="1.3" height="1.1" fill="#111"/>
<rect x="21.8" y="181.12" width="2.2" height="1.1" fill="#111"/>
<rect x="22.7" y="184.70" width="1.3" height="1.1" fill="#111"/>
<rect x="22.7" y="188.27" width="1.3" height="1.1" fill="#111"/>
<rect x="22.7" y="191.85" width="1.3" height="1.1" fill="#111"/>
<rect x="22.7" y="195.43" width="1.3" height="1.1" fill="#111"/>
<rect x="20.8" y="199.00" width="3.2" height="1.1" fill="#111"/>
<rect x="22.7" y="202.57" width="1.3" height="1.1" fill="#111"/>
<rect x="22.7" y="206.15" width="1.3" height="1.1" fill="#111"/>
<rect x="22.7" y="209.72" width="1.3" height="1.1" fill="#111"/>
<rect x="22.7" y="213.30" width="1.3" height="1.1" fill="#111"/>
<rect x="21.8" y="216.88" width="2.2" height="1.1" fill="#111"/>
<rect x="22.7" y="220.45" width="1.3" height="1.1" fill="#111"/>
<rect x="22.7" y="224.02" width="1.3" height="1.1" fill="#111"/>
<rect x="22.7" y="227.60" width="1.3" height="1.1" fill="#111"/>
<rect x="22.7" y="231.18" width="1.3" height="1.1" fill="#111"/>
<rect x="20.8" y="234.75" width="3.2" height="1.1" fill="#111"/>
<rect x="22.7" y="238.32" width="1.3" height="1.1" fill="#111"/>
<rect x="22.7" y="241.90" width="1.3" height="1.1" fill="#111"/>
<rect x="22.7" y="245.47" width="1.3" height="1.1" fill="#111"/>
<rect x="22.7" y="249.05" width="1.3" height="1.1" fill="#111"/>
<rect x="21.8" y="252.62" width="2.2" height="1.1" fill="#111"/>
<rect x="22.7" y="256.20" width="1.3" height="1.1" fill="#111"/>
<rect x="22.7" y="259.77" width="1.3" height="1.1" fill="#111"/>
<rect x="22.7" y="263.35" width="1.3" height="1.1" fill="#111"/>
<rect x="22.7" y="266.93" width="1.3" height="1.1" fill="#111"/>
<rect x="20.8" y="270.50" width="3.2" height="1.1" fill="#111"/>
<rect x="22.7" y="274.07" width="1.3" height="1.1" fill="#111"/>
<rect x="22.7" y="277.65" width="1.3" height="1.1" fill="#111"/>
<rect x="22.7" y="281.23" width="1.3" height="1.1" fill="#111"/>
<rect x="22.7" y="284.80" width="1.3" height="1.1" fill="#111"/>
<rect x="21.8" y="288.38" width="2.2" height="1.1" fill="#111"/>
<rect x="22.7" y="291.95" width="1.3" height="1.1" fill="#111"/>
<rect x="22.7" y="295.52" width="1.3" height="1.1" fill="#111"/>
<rect x="22.7" y="299.10" width="1.3" height="1.1" fill="#111"/>
<rect x="22.7" y="302.68" width="1.3" height="1.1" fill="#111"/>
<rect x="20.8" y="306.25" width="3.2" height="1.1" fill="#111"/>
<rect x="22.7" y="309.82" width="1.3" height="1.1" fill="#111"/>
<rect x="22.7" y="313.40" width="1.3" height="1.1" fill="#111"/>
<rect x="22.7" y="316.98" width="1.3" height="1.1" fill="#111"/>
<rect x="22.7" y="320.55" width="1.3" height="1.1" fill="#111"/>
<rect x="21.8" y="324.12" width="2.2" height="1.1" fill="#111"/>
<rect x="22.7" y="327.70" width="1.3" height="1.1" fill="#111"/>
<rect x="22.7" y="331.27" width="1.3" height="1.1" fill="#111"/>
<rect x="22.7" y="334.85" width="1.3" height="1.1" fill="#111"/>
<rect x="22.7" y="338.43" width="1.3" height="1.1" fill="#111"/>
<rect x="20.8" y="342.00" width="3.2" height="1.1" fill="#111"/>
<rect x="22.7" y="345.57" width="1.3" height="1.1" fill="#111"/>
<rect x="22.7" y="349.15" width="1.3" height="1.1" fill="#111"/>
<rect x="22.7" y="352.73" width="1.3" height="1.1" fill="#111"/>
<rect x="22.7" y="356.30" width="1.3" height="1.1" fill="#111"/>
<rect x="21.8" y="359.88" width="2.2" height="1.1" fill="#111"/>
<rect x="22.7" y="363.45" width="1.3" height="1.1" fill="#111"/>
<rect x="22.7" y="367.03" width="1.3" height="1.1" fill="#111"/>
<rect x="22.7" y="370.60" width="1.3" height="1.1" fill="#111"/>
<rect x="22.7" y="374.18" width="1.3" height="1.1" fill="#111"/>
<rect x="20.8" y="377.75" width="3.2" height="1.1" fill="#111"/>
<rect x="22.7" y="381.32" width="1.3" height="1.1" fill="#111"/>
<rect x="22.7" y="384.90" width="1.3" height="1.1" fill="#111"/>
<rect x="22.7" y="388.48" width="1.3" height="1.1" fill="#111"/>
<rect x="22.7" y="392.05" width="1.3" height="1.1" fill="#111"/>
<rect x="21.8" y="395.62" width="2.2" height="1.1" fill="#111"/>
<rect x="22.7" y="399.20" width="1.3" height="1.1" fill="#111"/>
<text transform="translate(21.3 378.3) rotate(-90)" font-size="4.6" fill="#000" stroke="#000" stroke-width="0.12" text-anchor="middle">80</text>
<text transform="translate(21.3 342.6) rotate(-90)" font-size="4.6" fill="#000" stroke="#000" stroke-width="0.12" text-anchor="middle">100</text>
<text transform="translate(21.3 306.8) rotate(-90)" font-size="4.6" fill="#000" stroke="#000" stroke-width="0.12" text-anchor="middle">120</text>
<text transform="translate(21.3 271.1) rotate(-90)" font-size="4.6" fill="#000" stroke="#000" stroke-width="0.12" text-anchor="middle">140</text>
<text transform="translate(21.3 235.3) rotate(-90)" font-size="4.6" fill="#000" stroke="#000" stroke-width="0.12" text-anchor="middle">160</text>
<text transform="translate(21.3 199.6) rotate(-90)" font-size="4.6" fill="#000" stroke="#000" stroke-width="0.12" text-anchor="middle">180</text>
<text transform="translate(21.3 163.8) rotate(-90)" font-size="4.6" fill="#000" stroke="#000" stroke-width="0.12" text-anchor="middle">200</text>
<text transform="translate(21.3 128.1) rotate(-90)" font-size="4.6" fill="#000" stroke="#000" stroke-width="0.12" text-anchor="middle">220</text>
<text transform="translate(21.3 92.3) rotate(-90)" font-size="4.6" fill="#000" stroke="#000" stroke-width="0.12" text-anchor="middle">240</text>
<path d="M15.8 348.3 H23.6" stroke="#444" stroke-width="0.9" stroke-dasharray="1 1"/>
<path d="M18.4 400.6 V407.6 M21.4 400.6 V407.6 M17.6 402.4 L19.8 404 L22.2 402.4 M17.6 406 L19.8 404.4 L22.2 406" stroke="#222" stroke-width="0.6" fill="none"/>
</svg>
<svg class="canvas" style="position:absolute;left:25px;top:69px" width="497" height="332" viewBox="25 69 497 332">
<rect x="48.2" y="69" width="0.9" height="332" fill="#555"/>
<rect x="423.9" y="69" width="4.2" height="332" fill="#6e6e6e"/>
<ellipse cx="144.5" cy="224.5" rx="13.5" ry="17.4" transform="rotate(-12 144.5 224.5)" fill="#f5e9df" stroke="#7c7088" stroke-width="0.55"/>
<ellipse cx="310.8" cy="223.4" rx="13.6" ry="17.4" transform="rotate(12 310.8 223.4)" fill="#f5e9df" stroke="#7c7088" stroke-width="0.55"/>
<path d="M226 281.6 C225.8 283.0 225.5 287.3 225.0 290.0 C224.5 292.7 223.3 296.7 223.0 298.0 L207.7 308.5 L211.2 319.4 L244 319.5 L253.6 308.6 L236.3 298.8 C236.0 297.3 234.2 293.1 234.2 290.0 C234.2 286.9 236.0 282.0 236.4 280.4 C239.5 279.7 249.6 277.7 255.0 276.0 C260.4 274.3 264.7 272.5 269.0 270.4 C273.3 268.3 277.8 265.7 281.0 263.6 C284.2 261.5 286.2 259.6 288.0 258.0 C289.8 256.4 290.7 256.3 292.0 254.0 C293.3 251.7 294.7 248.0 296.0 244.0 C297.3 240.0 298.8 235.3 300.0 230.0 C301.2 224.7 302.5 217.7 303.0 212.0 C303.5 206.3 303.7 201.3 303.0 196.0 C302.3 190.7 300.3 183.8 299.0 180.0 C297.7 176.2 297.3 176.2 295.0 173.0 C292.7 169.8 289.1 165.2 285.0 161.0 C280.9 156.8 276.4 151.7 270.6 148.0 C264.8 144.3 257.4 140.8 250.0 139.0 C242.6 137.2 235.2 136.7 226.0 137.0 C216.8 137.3 204.3 138.0 195.0 141.0 C185.7 144.0 176.7 149.3 170.0 155.0 C163.3 160.7 158.5 167.8 155.0 175.0 C151.5 182.2 150.0 192.2 149.0 198.0 C148.0 203.8 148.7 205.7 149.0 210.0 C149.3 214.3 150.0 219.0 151.0 224.0 C152.0 229.0 153.5 235.2 155.0 240.0 C156.5 244.8 157.8 248.8 160.0 253.0 C162.2 257.2 165.3 261.8 168.4 265.0 C171.5 268.2 174.0 269.8 178.4 272.0 C182.8 274.2 189.2 276.7 195.0 278.2 C200.8 279.7 207.8 280.3 213.0 280.8 C218.2 281.3 223.8 281.3 226.0 281.4 Z" fill="#f5e9df" stroke="#5e4e46" stroke-width="0.65"/>
<path d="M160.0 253.0 C158.8 251.5 155.5 247.5 153.0 244.0 C150.5 240.5 147.5 237.0 145.0 232.0 C142.5 227.0 139.7 219.7 138.0 214.0 C136.3 208.3 135.3 203.0 134.6 198.0 C133.9 193.0 133.8 188.7 134.0 184.0 C134.2 179.3 134.4 175.7 135.8 170.0 C137.2 164.3 139.1 156.6 142.6 150.0 C146.1 143.4 151.6 136.2 156.8 130.6 C162.0 125.0 167.3 120.4 173.6 116.4 C179.9 112.4 187.5 108.7 194.4 106.4 C201.3 104.1 209.1 103.4 215.0 102.6 C220.9 101.8 225.0 101.7 230.0 101.8 C235.0 101.9 239.2 102.0 245.0 103.4 C250.8 104.8 259.3 107.3 265.0 110.2 C270.7 113.1 275.0 117.2 279.0 121.0 C283.0 124.8 286.5 129.0 289.0 133.0 C291.5 137.0 293.2 143.0 294.0 145.0 C295.3 145.3 299.5 145.3 302.0 147.0 C304.5 148.7 306.9 151.3 309.0 155.0 C311.1 158.7 313.2 163.5 314.6 169.0 C316.0 174.5 317.2 181.8 317.4 188.0 C317.6 194.2 317.1 200.0 316.0 206.0 C314.9 212.0 312.8 218.7 311.0 224.0 C309.2 229.3 307.2 233.7 305.0 238.0 C302.8 242.3 298.8 247.7 297.6 249.6 L292 254 C292.7 252.3 294.7 248.0 296.0 244.0 C297.3 240.0 298.8 235.3 300.0 230.0 C301.2 224.7 302.5 217.7 303.0 212.0 C303.5 206.3 303.7 201.3 303.0 196.0 C302.3 190.7 300.3 183.8 299.0 180.0 C297.7 176.2 297.3 176.2 295.0 173.0 C292.7 169.8 289.1 165.2 285.0 161.0 C280.9 156.8 273.0 150.2 270.6 148.0 C269.7 149.5 267.6 153.8 265.0 157.0 C262.4 160.2 259.0 164.0 255.0 167.0 C251.0 170.0 246.0 172.7 241.0 175.0 C236.0 177.3 231.0 179.2 225.0 181.0 C219.0 182.8 213.3 184.1 205.0 186.0 C196.7 187.9 184.3 190.5 175.0 192.4 C165.7 194.3 153.3 196.7 149.0 197.6 C149.0 199.7 148.7 205.6 149.0 210.0 C149.3 214.4 150.0 219.0 151.0 224.0 C152.0 229.0 153.5 235.2 155.0 240.0 C156.5 244.8 159.2 250.8 160.0 253.0 Z" fill="#f8d000" stroke="#75630a" stroke-width="0.65" stroke-linejoin="round"/>
<path d="M308.7 265.7 C310.0 265.6 314.0 264.4 316.5 265.0 C319.0 265.6 321.3 267.4 323.5 269.6 C325.7 271.8 328.2 274.8 329.6 278.0 C331.0 281.2 331.7 285.9 332.0 288.7 C332.3 291.5 331.4 293.9 331.3 295.0 C330.0 293.8 326.2 290.1 323.5 287.8 C320.8 285.5 317.0 283.3 314.8 281.0 C312.6 278.7 311.4 276.6 310.4 274.0 C309.4 271.4 309.0 267.1 308.7 265.7 Z" fill="#f8d000" stroke="#75630a" stroke-width="0.65" stroke-linejoin="round"/>
<path d="M331.3 295 C331 299 330.2 304 329.2 307.8" fill="none" stroke="#6a5a10" stroke-width="0.7"/>
<circle cx="306.5" cy="255" r="9" fill="#f9a8ca" stroke="#a8607c" stroke-width="0.5"/>
<circle cx="297" cy="258.2" r="6.3" fill="#ee3a7e" stroke="#a82058" stroke-width="0.5"/>
<path d="M207.7 308.5 C206.9 308.2 204.6 306.9 203.0 306.6 C201.4 306.3 199.8 306.3 198.2 306.5 C196.6 306.7 195.0 307.2 193.6 307.8 C192.2 308.4 191.0 309.5 190.0 310.4 C189.0 311.3 188.3 312.3 187.8 313.4 C187.3 314.5 187.1 316.2 187.0 316.8 L193.9 351.2 L264 350.7 L275.3 320.3 C275.1 319.5 275.1 316.9 274.4 315.4 C273.7 313.9 272.3 312.6 271.0 311.4 C269.7 310.2 268.0 309.2 266.4 308.4 C264.8 307.6 263.1 307.0 261.5 306.8 C259.9 306.6 258.3 306.9 257.0 307.2 C255.7 307.5 254.2 308.4 253.6 308.6 L244 319.5 L211.2 319.4 Z" fill="#36c4aa" stroke="#173d36" stroke-width="0.6" stroke-dasharray="1.4 1"/>
<rect x="192.70000000000002" y="350.0" width="2.4" height="2.4" fill="#fff" stroke="#222" stroke-width="0.5"/>
<rect x="262.8" y="349.5" width="2.4" height="2.4" fill="#fff" stroke="#222" stroke-width="0.5"/>
<rect x="186.3" y="316.1" width="1.4" height="1.4" fill="#1e4e48"/>
<rect x="274.6" y="319.6" width="1.4" height="1.4" fill="#1e4e48"/>
<rect x="207.0" y="307.8" width="1.4" height="1.4" fill="#1e4e48"/>
<rect x="252.9" y="307.90000000000003" width="1.4" height="1.4" fill="#1e4e48"/>
<rect x="210.5" y="318.7" width="1.4" height="1.4" fill="#1e4e48"/>
<rect x="243.3" y="318.8" width="1.4" height="1.4" fill="#1e4e48"/>
</svg>
<svg class="vscroll" style="position:absolute;left:522px;top:69px" width="8" height="341" viewBox="522 69 8 341">
<rect x="522.4" y="70.6" width="7" height="7" rx="1" fill="#c6d5fb" stroke="#e8eefc" stroke-width="0.5"/><path d="M524.0 75.1 L525.9 73.1 L527.8 75.1" fill="none" stroke="#27408c" stroke-width="1.2"/>
<rect x="522.3" y="228.2" width="6.2" height="7.8" rx="0.9" fill="#cbdbf7" stroke="#dbe6fa" stroke-width="0.5"/><path d="M524 230.6 H526.8 M524 232.1 H526.8 M524 233.6 H526.8" stroke="#b3c9f2" stroke-width="0.6"/>
<rect x="522.4" y="393.8" width="7" height="7" rx="1" fill="#c6d5fb" stroke="#e8eefc" stroke-width="0.5"/><path d="M524.0 396.3 L525.9 398.3 L527.8 396.3" fill="none" stroke="#27408c" stroke-width="1.2"/>
<rect x="522.8" y="402.4" width="6.2" height="6.6" fill="#fff" stroke="#b9b6a4" stroke-width="0.6"/>
</svg>
<svg class="pagenav" style="position:absolute;left:25px;top:400.5px" width="497" height="9.5" viewBox="25 400.5 497 9.5">
<rect x="25" y="400.7" width="249" height="1" fill="#222"/>
<path d="M92.5 401.2 C94.4 401.4 95.6 409 98 409 H124.8 C127.2 409 128 401.4 129.8 401.2 Z" fill="#fff" stroke="#222" stroke-width="0.7"/>
<rect x="93" y="400.5" width="36.4" height="1.3" fill="#fff"/>
<text x="100.7" y="408.2" font-size="6.6" fill="#000" textLength="19.3" lengthAdjust="spacingAndGlyphs" font-weight="bold">页面 1</text>
<path d="M26.6 403.3 V407.3" stroke="#111" stroke-width="0.8"/><path d="M30.2 403.3 L27.6 405.3 L30.2 407.3 Z" fill="#111"/>
<path d="M36.2 405.2 H40.2 M38.2 403.2 V407.2" stroke="#111" stroke-width="0.9"/>
<text x="51.4" y="408.8" font-size="6.8" fill="#000" textLength="13.4" lengthAdjust="spacingAndGlyphs" font-weight="bold">1 / 1</text>
<path d="M77.6 405.2 H81.6 M79.6 403.2 V407.2" stroke="#111" stroke-width="0.9"/>
<path d="M89.8 403.3 V407.3" stroke="#111" stroke-width="0.8"/><path d="M86.2 403.3 L88.8 405.3 L86.2 407.3 Z" fill="#111"/>
<rect x="272.6" y="401.2" width="1.6" height="8.4" fill="#d8d5c4"/><rect x="273.2" y="401.2" width="0.6" height="8.4" fill="#555"/>
<rect x="275" y="401.8" width="8.6" height="7.4" rx="1" fill="#c6d5fb" stroke="#e8eefc" stroke-width="0.5"/><path d="M280.3 403.6 L278.3 405.5 L280.3 407.4" fill="none" stroke="#27408c" stroke-width="1.2"/>
<rect x="398.8" y="401.8" width="7.2" height="7.4" rx="1" fill="#c8d8fa" stroke="#b4c8f4" stroke-width="0.4"/><path d="M401.2 403.8 V407.2 M402.4 403.8 V407.2 M403.6 403.8 V407.2" stroke="#e4ecfd" stroke-width="0.5"/>
<rect x="513.6" y="401.8" width="7.4" height="7.4" rx="1" fill="#c6d5fb" stroke="#e8eefc" stroke-width="0.5"/><path d="M516.3000000000001 403.6 L518.3000000000001 405.5 L516.3000000000001 407.4" fill="none" stroke="#27408c" stroke-width="1.2"/>
</svg>
<svg class="palette" style="position:absolute;left:530px;top:58px" width="70" height="352" viewBox="530 58 70 352">
<rect x="532.5999999999999" y="63" width="8.1" height="7.4" fill="#1c1c1c"/><rect x="533.8" y="64.2" width="5.7" height="5" fill="#f4f4f0"/><rect x="533.8" y="64.2" width="2.6" height="2.4" fill="#1c1c1c"/><path d="M535.0 69.2 L538.9 64.8" stroke="#1c1c1c" stroke-width="0.9"/><rect x="537.0999999999999" y="67.2" width="2.4" height="2" fill="#1c1c1c"/>
<rect x="532.5999999999999" y="72" width="8.3" height="6" rx="0.8" fill="#f6f5ef"/><path d="M535.05 76 L536.75 74.2 L538.45 76" fill="none" stroke="#d4d2c6" stroke-width="1"/>
<rect x="531.8" y="79.8" width="9.9" height="310.1" fill="#2a2018"/>
<rect x="532.5" y="80.5" width="8.5" height="7.2" fill="#fff" stroke="#222" stroke-width="0.7"/><path d="M533.8 81.8 L539.6999999999999 86.6 M539.6999999999999 81.8 L533.8 86.6" stroke="#1c1c3c" stroke-width="0.85"/>
<rect x="532.8" y="88.80" width="7.9" height="7.87" fill="#f5f08a"/>
<rect x="532.4" y="93.67" width="2.5" height="2.5" fill="#fff" stroke="#0c0c0c" stroke-width="0.9"/>
<rect x="532.8" y="97.67" width="7.9" height="7.87" fill="#f4c0bc"/>
<rect x="532.4" y="102.54" width="2.5" height="2.5" fill="#fff" stroke="#0c0c0c" stroke-width="0.9"/>
<rect x="532.8" y="106.54" width="7.9" height="7.87" fill="#f3a7c0"/>
<rect x="532.4" y="111.41" width="2.5" height="2.5" fill="#fff" stroke="#0c0c0c" stroke-width="0.9"/>
<rect x="532.8" y="115.41" width="7.9" height="7.87" fill="#d49bd8"/>
<rect x="532.4" y="120.28" width="2.5" height="2.5" fill="#fff" stroke="#0c0c0c" stroke-width="0.9"/>
<rect x="532.8" y="124.28" width="7.9" height="7.87" fill="#29b7d9"/>
<rect x="532.4" y="129.15" width="2.5" height="2.5" fill="#fff" stroke="#0c0c0c" stroke-width="0.9"/>
<rect x="532.8" y="133.15" width="7.9" height="7.87" fill="#2db8a0"/>
<rect x="532.4" y="138.02" width="2.5" height="2.5" fill="#fff" stroke="#0c0c0c" stroke-width="0.9"/>
<rect x="532.8" y="142.02" width="7.9" height="7.87" fill="#b4a694"/>
<rect x="532.4" y="146.89" width="2.5" height="2.5" fill="#fff" stroke="#0c0c0c" stroke-width="0.9"/>
<rect x="532.8" y="150.89" width="7.9" height="7.87" fill="#f5efd8"/>
<rect x="532.4" y="155.76" width="2.5" height="2.5" fill="#fff" stroke="#0c0c0c" stroke-width="0.9"/>
<rect x="532.8" y="159.76" width="7.9" height="7.87" fill="#f4edcc"/>
<rect x="532.4" y="164.63" width="2.5" height="2.5" fill="#fff" stroke="#0c0c0c" stroke-width="0.9"/>
<rect x="532.8" y="168.63" width="7.9" height="7.87" fill="#f5efda"/>
<rect x="532.4" y="173.50" width="2.5" height="2.5" fill="#fff" stroke="#0c0c0c" stroke-width="0.9"/>
<rect x="532.8" y="177.50" width="7.9" height="7.87" fill="#f5efdc"/>
<rect x="532.4" y="182.37" width="2.5" height="2.5" fill="#fff" stroke="#0c0c0c" stroke-width="0.9"/>
<rect x="532.8" y="186.37" width="7.9" height="7.87" fill="#f6f0de"/>
<rect x="532.4" y="191.24" width="2.5" height="2.5" fill="#fff" stroke="#0c0c0c" stroke-width="0.9"/>
<rect x="532.8" y="195.24" width="7.9" height="7.87" fill="#f6f1e4"/>
<rect x="532.4" y="200.11" width="2.5" height="2.5" fill="#fff" stroke="#0c0c0c" stroke-width="0.9"/>
<rect x="532.8" y="204.11" width="7.9" height="7.87" fill="#f6f1e2"/>
<rect x="532.4" y="208.98" width="2.5" height="2.5" fill="#fff" stroke="#0c0c0c" stroke-width="0.9"/>
<rect x="532.8" y="212.98" width="7.9" height="7.87" fill="#f6f0e4"/>
<rect x="532.4" y="217.85" width="2.5" height="2.5" fill="#fff" stroke="#0c0c0c" stroke-width="0.9"/>
<rect x="532.8" y="221.85" width="7.9" height="7.87" fill="#f6f2e6"/>
<rect x="532.4" y="226.72" width="2.5" height="2.5" fill="#fff" stroke="#0c0c0c" stroke-width="0.9"/>
<rect x="532.8" y="230.72" width="7.9" height="7.87" fill="#f5f0e4"/>
<rect x="532.4" y="235.59" width="2.5" height="2.5" fill="#fff" stroke="#0c0c0c" stroke-width="0.9"/>
<rect x="532.8" y="239.59" width="7.9" height="7.87" fill="#f5f0e2"/>
<rect x="532.4" y="244.46" width="2.5" height="2.5" fill="#fff" stroke="#0c0c0c" stroke-width="0.9"/>
<rect x="532.8" y="248.46" width="7.9" height="7.87" fill="#f6f1e0"/>
<rect x="532.4" y="253.33" width="2.5" height="2.5" fill="#fff" stroke="#0c0c0c" stroke-width="0.9"/>
<rect x="532.8" y="257.33" width="7.9" height="7.87" fill="#f6f0dc"/>
<rect x="532.4" y="262.20" width="2.5" height="2.5" fill="#fff" stroke="#0c0c0c" stroke-width="0.9"/>
<rect x="532.8" y="266.20" width="7.9" height="7.87" fill="#f6f0de"/>
<rect x="532.4" y="271.07" width="2.5" height="2.5" fill="#fff" stroke="#0c0c0c" stroke-width="0.9"/>
<rect x="532.8" y="275.07" width="7.9" height="7.87" fill="#f5efdc"/>
<rect x="532.4" y="279.94" width="2.5" height="2.5" fill="#fff" stroke="#0c0c0c" stroke-width="0.9"/>
<rect x="532.8" y="283.94" width="7.9" height="7.87" fill="#f5efda"/>
<rect x="532.4" y="288.81" width="2.5" height="2.5" fill="#fff" stroke="#0c0c0c" stroke-width="0.9"/>
<rect x="532.8" y="292.81" width="7.9" height="7.87" fill="#f4e8e0"/>
<rect x="532.4" y="297.68" width="2.5" height="2.5" fill="#fff" stroke="#0c0c0c" stroke-width="0.9"/>
<rect x="532.8" y="301.68" width="7.9" height="7.87" fill="#f2eee4"/>
<rect x="532.4" y="306.55" width="2.5" height="2.5" fill="#fff" stroke="#0c0c0c" stroke-width="0.9"/>
<rect x="532.8" y="310.55" width="7.9" height="7.87" fill="#f3efe2"/>
<rect x="532.4" y="315.42" width="2.5" height="2.5" fill="#fff" stroke="#0c0c0c" stroke-width="0.9"/>
<rect x="532.8" y="319.42" width="7.9" height="7.87" fill="#f4f0e0"/>
<rect x="532.4" y="324.29" width="2.5" height="2.5" fill="#fff" stroke="#0c0c0c" stroke-width="0.9"/>
<rect x="532.8" y="328.29" width="7.9" height="7.87" fill="#f4f0dc"/>
<rect x="532.4" y="333.16" width="2.5" height="2.5" fill="#fff" stroke="#0c0c0c" stroke-width="0.9"/>
<rect x="532.8" y="337.16" width="7.9" height="7.87" fill="#f4f0d0"/>
<rect x="532.4" y="342.03" width="2.5" height="2.5" fill="#fff" stroke="#0c0c0c" stroke-width="0.9"/>
<rect x="532.8" y="346.03" width="7.9" height="7.87" fill="#f5f2c4"/>
<rect x="532.4" y="350.90" width="2.5" height="2.5" fill="#fff" stroke="#0c0c0c" stroke-width="0.9"/>
<rect x="532.8" y="354.90" width="7.9" height="7.87" fill="#f5f2c0"/>
<rect x="532.4" y="359.77" width="2.5" height="2.5" fill="#fff" stroke="#0c0c0c" stroke-width="0.9"/>
<rect x="532.8" y="363.77" width="7.9" height="7.87" fill="#f5f2c0"/>
<rect x="532.4" y="368.64" width="2.5" height="2.5" fill="#fff" stroke="#0c0c0c" stroke-width="0.9"/>
<rect x="532.8" y="372.64" width="7.9" height="7.87" fill="#f5f2bc"/>
<rect x="532.4" y="377.51" width="2.5" height="2.5" fill="#fff" stroke="#0c0c0c" stroke-width="0.9"/>
<rect x="532.8" y="381.51" width="7.9" height="7.87" fill="#f5f2b8"/>
<rect x="532.4" y="386.38" width="2.5" height="2.5" fill="#fff" stroke="#0c0c0c" stroke-width="0.9"/>
<rect x="532.5999999999999" y="391.6" width="8.3" height="6.2" rx="0.8" fill="#c9d8fb"/><path d="M534.85 393.6 L536.75 395.6 L538.65 393.6" fill="none" stroke="#27408c" stroke-width="1.2"/>
<path d="M535.15 400.8 V404.8" stroke="#111" stroke-width="0.8"/><path d="M538.55 400.8 L535.95 402.8 L538.55 404.8 Z" fill="#111"/>
<rect x="544.1999999999999" y="63" width="7.8" height="7.4" fill="#1c1c1c"/><rect x="545.4" y="64.2" width="5.3999999999999995" height="5" fill="#f4f4f0"/><rect x="545.4" y="64.2" width="2.6" height="2.4" fill="#1c1c1c"/><path d="M546.6 69.2 L550.2 64.8" stroke="#1c1c1c" stroke-width="0.9"/><rect x="548.4" y="67.2" width="2.4" height="2" fill="#1c1c1c"/>
<rect x="544.1999999999999" y="72" width="8.0" height="6" rx="0.8" fill="#f6f5ef"/><path d="M546.4999999999999 76 L548.1999999999999 74.2 L549.9 76" fill="none" stroke="#d4d2c6" stroke-width="1"/>
<rect x="543.4" y="79.8" width="9.6" height="310.1" fill="#2a2018"/>
<rect x="544.1" y="80.5" width="8.2" height="7.2" fill="#fff" stroke="#222" stroke-width="0.7"/><path d="M545.4 81.8 L551.0 86.6 M551.0 81.8 L545.4 86.6" stroke="#1c1c3c" stroke-width="0.85"/>
<rect x="544.4" y="88.80" width="7.6" height="7.87" fill="#8b6233"/>
<rect x="544.0" y="93.67" width="2.5" height="2.5" fill="#fff" stroke="#0c0c0c" stroke-width="0.9"/>
<rect x="544.4" y="97.67" width="7.6" height="7.87" fill="#9e6a3c"/>
<rect x="544.0" y="102.54" width="2.5" height="2.5" fill="#fff" stroke="#0c0c0c" stroke-width="0.9"/>
<rect x="544.4" y="106.54" width="7.6" height="7.87" fill="#a0693f"/>
<rect x="544.0" y="111.41" width="2.5" height="2.5" fill="#fff" stroke="#0c0c0c" stroke-width="0.9"/>
<rect x="544.4" y="115.41" width="7.6" height="7.87" fill="#a66a3c"/>
<rect x="544.0" y="120.28" width="2.5" height="2.5" fill="#fff" stroke="#0c0c0c" stroke-width="0.9"/>
<rect x="544.4" y="124.28" width="7.6" height="7.87" fill="#a5683a"/>
<rect x="544.0" y="129.15" width="2.5" height="2.5" fill="#fff" stroke="#0c0c0c" stroke-width="0.9"/>
<rect x="544.4" y="133.15" width="7.6" height="7.87" fill="#a0673c"/>
<rect x="544.0" y="138.02" width="2.5" height="2.5" fill="#fff" stroke="#0c0c0c" stroke-width="0.9"/>
<rect x="544.4" y="142.02" width="7.6" height="7.87" fill="#8e9e9e"/>
<rect x="544.0" y="146.89" width="2.5" height="2.5" fill="#fff" stroke="#0c0c0c" stroke-width="0.9"/>
<rect x="544.4" y="150.89" width="7.6" height="7.87" fill="#9a9c90"/>
<rect x="544.0" y="155.76" width="2.5" height="2.5" fill="#fff" stroke="#0c0c0c" stroke-width="0.9"/>
<rect x="544.4" y="159.76" width="7.6" height="7.87" fill="#9a9080"/>
<rect x="544.0" y="164.63" width="2.5" height="2.5" fill="#fff" stroke="#0c0c0c" stroke-width="0.9"/>
<rect x="544.4" y="168.63" width="7.6" height="7.87" fill="#9c8468"/>
<rect x="544.0" y="173.50" width="2.5" height="2.5" fill="#fff" stroke="#0c0c0c" stroke-width="0.9"/>
<rect x="544.4" y="177.50" width="7.6" height="7.87" fill="#9c7852"/>
<rect x="544.0" y="182.37" width="2.5" height="2.5" fill="#fff" stroke="#0c0c0c" stroke-width="0.9"/>
<rect x="544.4" y="186.37" width="7.6" height="7.87" fill="#a87048"/>
<rect x="544.0" y="191.24" width="2.5" height="2.5" fill="#fff" stroke="#0c0c0c" stroke-width="0.9"/>
<rect x="544.4" y="195.24" width="7.6" height="7.87" fill="#b09080"/>
<rect x="544.0" y="200.11" width="2.5" height="2.5" fill="#fff" stroke="#0c0c0c" stroke-width="0.9"/>
<rect x="544.4" y="204.11" width="7.6" height="7.87" fill="#b08468"/>
<rect x="544.0" y="208.98" width="2.5" height="2.5" fill="#fff" stroke="#0c0c0c" stroke-width="0.9"/>
<rect x="544.4" y="212.98" width="7.6" height="7.87" fill="#c07c54"/>
<rect x="544.0" y="217.85" width="2.5" height="2.5" fill="#fff" stroke="#0c0c0c" stroke-width="0.9"/>
<rect x="544.4" y="221.85" width="7.6" height="7.87" fill="#c46c40"/>
<rect x="544.0" y="226.72" width="2.5" height="2.5" fill="#fff" stroke="#0c0c0c" stroke-width="0.9"/>
<rect x="544.4" y="230.72" width="7.6" height="7.87" fill="#a09090"/>
<rect x="544.0" y="235.59" width="2.5" height="2.5" fill="#fff" stroke="#0c0c0c" stroke-width="0.9"/>
<rect x="544.4" y="239.59" width="7.6" height="7.87" fill="#bc9c94"/>
<rect x="544.0" y="244.46" width="2.5" height="2.5" fill="#fff" stroke="#0c0c0c" stroke-width="0.9"/>
<rect x="544.4" y="248.46" width="7.6" height="7.87" fill="#c49488"/>
<rect x="544.0" y="253.33" width="2.5" height="2.5" fill="#fff" stroke="#0c0c0c" stroke-width="0.9"/>
<rect x="544.4" y="257.33" width="7.6" height="7.87" fill="#c87c68"/>
<rect x="544.0" y="262.20" width="2.5" height="2.5" fill="#fff" stroke="#0c0c0c" stroke-width="0.9"/>
<rect x="544.4" y="266.20" width="7.6" height="7.87" fill="#c098a0"/>
<rect x="544.0" y="271.07" width="2.5" height="2.5" fill="#fff" stroke="#0c0c0c" stroke-width="0.9"/>
<rect x="544.4" y="275.07" width="7.6" height="7.87" fill="#c07890"/>
<rect x="544.0" y="279.94" width="2.5" height="2.5" fill="#fff" stroke="#0c0c0c" stroke-width="0.9"/>
<rect x="544.4" y="283.94" width="7.6" height="7.87" fill="#c06080"/>
<rect x="544.0" y="288.81" width="2.5" height="2.5" fill="#fff" stroke="#0c0c0c" stroke-width="0.9"/>
<rect x="544.4" y="292.81" width="7.6" height="7.87" fill="#d06c78"/>
<rect x="544.0" y="297.68" width="2.5" height="2.5" fill="#fff" stroke="#0c0c0c" stroke-width="0.9"/>
<rect x="544.4" y="301.68" width="7.6" height="7.87" fill="#b890b0"/>
<rect x="544.0" y="306.55" width="2.5" height="2.5" fill="#fff" stroke="#0c0c0c" stroke-width="0.9"/>
<rect x="544.4" y="310.55" width="7.6" height="7.87" fill="#c060a0"/>
<rect x="544.0" y="315.42" width="2.5" height="2.5" fill="#fff" stroke="#0c0c0c" stroke-width="0.9"/>
<rect x="544.4" y="319.42" width="7.6" height="7.87" fill="#c85090"/>
<rect x="544.0" y="324.29" width="2.5" height="2.5" fill="#fff" stroke="#0c0c0c" stroke-width="0.9"/>
<rect x="544.4" y="328.29" width="7.6" height="7.87" fill="#d04088"/>
<rect x="544.0" y="333.16" width="2.5" height="2.5" fill="#fff" stroke="#0c0c0c" stroke-width="0.9"/>
<rect x="544.4" y="337.16" width="7.6" height="7.87" fill="#b078ac"/>
<rect x="544.0" y="342.03" width="2.5" height="2.5" fill="#fff" stroke="#0c0c0c" stroke-width="0.9"/>
<rect x="544.4" y="346.03" width="7.6" height="7.87" fill="#b468a8"/>
<rect x="544.0" y="350.90" width="2.5" height="2.5" fill="#fff" stroke="#0c0c0c" stroke-width="0.9"/>
<rect x="544.4" y="354.90" width="7.6" height="7.87" fill="#b050a0"/>
<rect x="544.0" y="359.77" width="2.5" height="2.5" fill="#fff" stroke="#0c0c0c" stroke-width="0.9"/>
<rect x="544.4" y="363.77" width="7.6" height="7.87" fill="#b03c98"/>
<rect x="544.0" y="368.64" width="2.5" height="2.5" fill="#fff" stroke="#0c0c0c" stroke-width="0.9"/>
<rect x="544.4" y="372.64" width="7.6" height="7.87" fill="#a898b8"/>
<rect x="544.0" y="377.51" width="2.5" height="2.5" fill="#fff" stroke="#0c0c0c" stroke-width="0.9"/>
<rect x="544.4" y="381.51" width="7.6" height="7.87" fill="#b080b8"/>
<rect x="544.0" y="386.38" width="2.5" height="2.5" fill="#fff" stroke="#0c0c0c" stroke-width="0.9"/>
<rect x="544.1999999999999" y="391.6" width="8.0" height="6.2" rx="0.8" fill="#c9d8fb"/><path d="M546.3 393.6 L548.1999999999999 395.6 L550.0999999999999 393.6" fill="none" stroke="#27408c" stroke-width="1.2"/>
<path d="M546.5999999999999 400.8 V404.8" stroke="#111" stroke-width="0.8"/><path d="M549.9999999999999 400.8 L547.4 402.8 L549.9999999999999 404.8 Z" fill="#111"/>
<rect x="556.0" y="63" width="8.2" height="7.4" fill="#1c1c1c"/><rect x="557.2" y="64.2" width="5.8" height="5" fill="#f4f4f0"/><rect x="557.2" y="64.2" width="2.6" height="2.4" fill="#1c1c1c"/><path d="M558.4000000000001 69.2 L562.4000000000001 64.8" stroke="#1c1c1c" stroke-width="0.9"/><rect x="560.6" y="67.2" width="2.4" height="2" fill="#1c1c1c"/>
<rect x="556.0" y="72" width="8.4" height="6" rx="0.8" fill="#c9d8fb"/><path d="M558.3000000000001 76 L560.2 74 L562.1 76" fill="none" stroke="#27408c" stroke-width="1.2"/>
<rect x="555.0" y="79.8" width="10.4" height="310.1" fill="#4a4440"/>
<rect x="555.9000000000001" y="80.5" width="8.6" height="7.2" fill="#fff" stroke="#222" stroke-width="0.7"/><path d="M557.2 81.8 L563.2 86.6 M563.2 81.8 L557.2 86.6" stroke="#1c1c3c" stroke-width="0.85"/>
<rect x="555.7" y="88.30" width="9.0" height="8.92" fill="#e9bfc9"/>
<rect x="555.7" y="96.47" width="9.0" height="0.7" fill="#000" opacity="0.22"/>
<rect x="555.7" y="97.17" width="9.0" height="8.92" fill="#e8145f"/>
<rect x="555.7" y="105.34" width="9.0" height="0.7" fill="#000" opacity="0.22"/>
<rect x="555.7" y="106.04" width="9.0" height="8.92" fill="#e81a66"/>
<rect x="555.7" y="114.21" width="9.0" height="0.7" fill="#000" opacity="0.22"/>
<rect x="555.7" y="114.91" width="9.0" height="8.92" fill="#ee5e9b"/>
<rect x="555.7" y="123.08" width="9.0" height="0.7" fill="#000" opacity="0.22"/>
<rect x="555.7" y="123.78" width="9.0" height="8.92" fill="#f08cb4"/>
<rect x="555.7" y="131.95" width="9.0" height="0.7" fill="#000" opacity="0.22"/>
<rect x="555.7" y="132.65" width="9.0" height="8.92" fill="#f29cbe"/>
<rect x="555.7" y="140.82" width="9.0" height="0.7" fill="#000" opacity="0.22"/>
<rect x="555.7" y="141.52" width="9.0" height="8.92" fill="#efa0c0"/>
<rect x="555.7" y="149.69" width="9.0" height="0.7" fill="#000" opacity="0.22"/>
<rect x="555.7" y="150.39" width="9.0" height="8.92" fill="#f3c6dc"/>
<rect x="555.7" y="158.56" width="9.0" height="0.7" fill="#000" opacity="0.22"/>
<rect x="555.7" y="159.26" width="9.0" height="8.92" fill="#eeddea"/>
<rect x="555.7" y="167.43" width="9.0" height="0.7" fill="#000" opacity="0.22"/>
<rect x="555.7" y="168.13" width="9.0" height="8.92" fill="#e3e6f3"/>
<rect x="555.7" y="176.30" width="9.0" height="0.7" fill="#000" opacity="0.22"/>
<rect x="555.7" y="177.00" width="9.0" height="8.92" fill="#d81858"/>
<rect x="555.7" y="185.17" width="9.0" height="0.7" fill="#000" opacity="0.22"/>
<rect x="555.7" y="185.87" width="9.0" height="8.92" fill="#e0246a"/>
<rect x="555.7" y="194.04" width="9.0" height="0.7" fill="#000" opacity="0.22"/>
<rect x="555.7" y="194.74" width="9.0" height="8.92" fill="#e04888"/>
<rect x="555.7" y="202.91" width="9.0" height="0.7" fill="#000" opacity="0.22"/>
<rect x="555.7" y="203.61" width="9.0" height="8.92" fill="#e480ac"/>
<rect x="555.7" y="211.78" width="9.0" height="0.7" fill="#000" opacity="0.22"/>
<rect x="555.7" y="212.48" width="9.0" height="8.92" fill="#e68ab4"/>
<rect x="555.7" y="220.65" width="9.0" height="0.7" fill="#000" opacity="0.22"/>
<rect x="555.7" y="221.35" width="9.0" height="8.92" fill="#ea9cc0"/>
<rect x="555.7" y="229.52" width="9.0" height="0.7" fill="#000" opacity="0.22"/>
<rect x="555.7" y="230.22" width="9.0" height="8.92" fill="#eec4dc"/>
<rect x="555.7" y="238.39" width="9.0" height="0.7" fill="#000" opacity="0.22"/>
<rect x="555.7" y="239.09" width="9.0" height="8.92" fill="#eed0e4"/>
<rect x="555.7" y="247.26" width="9.0" height="0.7" fill="#000" opacity="0.22"/>
<rect x="555.7" y="247.96" width="9.0" height="8.92" fill="#e2e2f2"/>
<rect x="555.7" y="256.13" width="9.0" height="0.7" fill="#000" opacity="0.22"/>
<rect x="555.7" y="256.83" width="9.0" height="8.92" fill="#d01c50"/>
<rect x="555.7" y="265.00" width="9.0" height="0.7" fill="#000" opacity="0.22"/>
<rect x="555.7" y="265.70" width="9.0" height="8.92" fill="#d42058"/>
<rect x="555.7" y="273.87" width="9.0" height="0.7" fill="#000" opacity="0.22"/>
<rect x="555.7" y="274.57" width="9.0" height="8.92" fill="#d83c78"/>
<rect x="555.7" y="282.74" width="9.0" height="0.7" fill="#000" opacity="0.22"/>
<rect x="555.7" y="283.44" width="9.0" height="8.92" fill="#dc5890"/>
<rect x="555.7" y="291.61" width="9.0" height="0.7" fill="#000" opacity="0.22"/>
<rect x="555.7" y="292.31" width="9.0" height="8.92" fill="#d06890"/>
<rect x="555.7" y="300.48" width="9.0" height="0.7" fill="#000" opacity="0.22"/>
<rect x="555.7" y="301.18" width="9.0" height="8.92" fill="#d07c9c"/>
<rect x="555.7" y="309.35" width="9.0" height="0.7" fill="#000" opacity="0.22"/>
<rect x="555.7" y="310.05" width="9.0" height="8.92" fill="#d8a8c8"/>
<rect x="555.7" y="318.22" width="9.0" height="0.7" fill="#000" opacity="0.22"/>
<rect x="555.7" y="318.92" width="9.0" height="8.92" fill="#d4b4d0"/>
<rect x="555.7" y="327.09" width="9.0" height="0.7" fill="#000" opacity="0.22"/>
<rect x="555.7" y="327.79" width="9.0" height="8.92" fill="#d0d4e4"/>
<rect x="555.7" y="335.96" width="9.0" height="0.7" fill="#000" opacity="0.22"/>
<rect x="555.7" y="336.66" width="9.0" height="8.92" fill="#f01870"/>
<rect x="555.7" y="344.83" width="9.0" height="0.7" fill="#000" opacity="0.22"/>
<rect x="555.7" y="345.53" width="9.0" height="8.92" fill="#f03880"/>
<rect x="555.7" y="353.70" width="9.0" height="0.7" fill="#000" opacity="0.22"/>
<rect x="555.7" y="354.40" width="9.0" height="8.92" fill="#f560a8"/>
<rect x="555.7" y="362.57" width="9.0" height="0.7" fill="#000" opacity="0.22"/>
<rect x="555.7" y="363.27" width="9.0" height="8.92" fill="#f870b0"/>
<rect x="555.7" y="371.44" width="9.0" height="0.7" fill="#000" opacity="0.22"/>
<rect x="555.7" y="372.14" width="9.0" height="8.92" fill="#f890c0"/>
<rect x="555.7" y="380.31" width="9.0" height="0.7" fill="#000" opacity="0.22"/>
<rect x="555.7" y="381.01" width="9.0" height="8.92" fill="#f8a8cc"/>
<rect x="555.7" y="389.18" width="9.0" height="0.7" fill="#000" opacity="0.22"/>
<rect x="556.0" y="391.6" width="8.4" height="6.2" rx="0.8" fill="#c9d8fb"/><path d="M558.3000000000001 393.6 L560.2 395.6 L562.1 393.6" fill="none" stroke="#27408c" stroke-width="1.2"/>
<path d="M558.6 400.8 V404.8" stroke="#111" stroke-width="0.8"/><path d="M562.0 400.8 L559.4000000000001 402.8 L562.0 404.8 Z" fill="#111"/>
<rect x="567.4" y="63" width="7.2" height="7.4" fill="#1c1c1c"/><rect x="568.6" y="64.2" width="4.8" height="5" fill="#f4f4f0"/><rect x="568.6" y="64.2" width="2.6" height="2.4" fill="#1c1c1c"/><path d="M569.8000000000001 69.2 L572.8000000000001 64.8" stroke="#1c1c1c" stroke-width="0.9"/><rect x="571.0" y="67.2" width="2.4" height="2" fill="#1c1c1c"/>
<rect x="567.4" y="72" width="7.4" height="6" rx="0.8" fill="#c9d8fb"/><path d="M569.2 76 L571.1 74 L573.0 76" fill="none" stroke="#27408c" stroke-width="1.2"/>
<rect x="566.4" y="79.8" width="9.4" height="310.1" fill="#4a4440"/>
<rect x="567.3000000000001" y="80.5" width="7.6" height="7.2" fill="#fff" stroke="#222" stroke-width="0.7"/><path d="M568.6 81.8 L573.6 86.6 M573.6 81.8 L568.6 86.6" stroke="#1c1c3c" stroke-width="0.85"/>
<rect x="567.1" y="88.30" width="8.0" height="8.92" fill="#f5e000"/>
<rect x="567.1" y="96.47" width="8.0" height="0.7" fill="#000" opacity="0.22"/>
<rect x="567.1" y="97.17" width="8.0" height="8.92" fill="#f5d9a3"/>
<rect x="567.1" y="105.34" width="8.0" height="0.7" fill="#000" opacity="0.22"/>
<rect x="567.1" y="106.04" width="8.0" height="8.92" fill="#8c3222"/>
<rect x="567.1" y="114.21" width="8.0" height="0.7" fill="#000" opacity="0.22"/>
<rect x="567.1" y="114.91" width="8.0" height="8.92" fill="#d53a12"/>
<rect x="567.1" y="123.08" width="8.0" height="0.7" fill="#000" opacity="0.22"/>
<rect x="567.1" y="123.78" width="8.0" height="8.92" fill="#ea3c10"/>
<rect x="567.1" y="131.95" width="8.0" height="0.7" fill="#000" opacity="0.22"/>
<rect x="567.1" y="132.65" width="8.0" height="8.92" fill="#f0602e"/>
<rect x="567.1" y="140.82" width="8.0" height="0.7" fill="#000" opacity="0.22"/>
<rect x="567.1" y="141.52" width="8.0" height="8.92" fill="#f4805e"/>
<rect x="567.1" y="149.69" width="8.0" height="0.7" fill="#000" opacity="0.22"/>
<rect x="567.1" y="150.39" width="8.0" height="8.92" fill="#f8d8cc"/>
<rect x="567.1" y="158.56" width="8.0" height="0.7" fill="#000" opacity="0.22"/>
<rect x="567.1" y="159.26" width="8.0" height="8.92" fill="#c02058"/>
<rect x="567.1" y="167.43" width="8.0" height="0.7" fill="#000" opacity="0.22"/>
<rect x="567.1" y="168.13" width="8.0" height="8.92" fill="#e42858"/>
<rect x="567.1" y="176.30" width="8.0" height="0.7" fill="#000" opacity="0.22"/>
<rect x="567.1" y="177.00" width="8.0" height="8.92" fill="#ea3060"/>
<rect x="567.1" y="185.17" width="8.0" height="0.7" fill="#000" opacity="0.22"/>
<rect x="567.1" y="185.87" width="8.0" height="8.92" fill="#f04848"/>
<rect x="567.1" y="194.04" width="8.0" height="0.7" fill="#000" opacity="0.22"/>
<rect x="567.1" y="194.74" width="8.0" height="8.92" fill="#f04c7c"/>
<rect x="567.1" y="202.91" width="8.0" height="0.7" fill="#000" opacity="0.22"/>
<rect x="567.1" y="203.61" width="8.0" height="8.92" fill="#ee3c6c"/>
<rect x="567.1" y="211.78" width="8.0" height="0.7" fill="#000" opacity="0.22"/>
<rect x="567.1" y="212.48" width="8.0" height="8.92" fill="#ee58a0"/>
<rect x="567.1" y="220.65" width="8.0" height="0.7" fill="#000" opacity="0.22"/>
<rect x="567.1" y="221.35" width="8.0" height="8.92" fill="#8c1890"/>
<rect x="567.1" y="229.52" width="8.0" height="0.7" fill="#000" opacity="0.22"/>
<rect x="567.1" y="230.22" width="8.0" height="8.92" fill="#c81c84"/>
<rect x="567.1" y="238.39" width="8.0" height="0.7" fill="#000" opacity="0.22"/>
<rect x="567.1" y="239.09" width="8.0" height="8.92" fill="#d848a8"/>
<rect x="567.1" y="247.26" width="8.0" height="0.7" fill="#000" opacity="0.22"/>
<rect x="567.1" y="247.96" width="8.0" height="8.92" fill="#d040a8"/>
<rect x="567.1" y="256.13" width="8.0" height="0.7" fill="#000" opacity="0.22"/>
<rect x="567.1" y="256.83" width="8.0" height="8.92" fill="#c870c0"/>
<rect x="567.1" y="265.00" width="8.0" height="0.7" fill="#000" opacity="0.22"/>
<rect x="567.1" y="265.70" width="8.0" height="8.92" fill="#e0a0dc"/>
<rect x="567.1" y="273.87" width="8.0" height="0.7" fill="#000" opacity="0.22"/>
<rect x="567.1" y="274.57" width="8.0" height="8.92" fill="#7c1ca8"/>
<rect x="567.1" y="282.74" width="8.0" height="0.7" fill="#000" opacity="0.22"/>
<rect x="567.1" y="283.44" width="8.0" height="8.92" fill="#7020a0"/>
<rect x="567.1" y="291.61" width="8.0" height="0.7" fill="#000" opacity="0.22"/>
<rect x="567.1" y="292.31" width="8.0" height="8.92" fill="#7828a8"/>
<rect x="567.1" y="300.48" width="8.0" height="0.7" fill="#000" opacity="0.22"/>
<rect x="567.1" y="301.18" width="8.0" height="8.92" fill="#7040b8"/>
<rect x="567.1" y="309.35" width="8.0" height="0.7" fill="#000" opacity="0.22"/>
<rect x="567.1" y="310.05" width="8.0" height="8.92" fill="#8050c8"/>
<rect x="567.1" y="318.22" width="8.0" height="0.7" fill="#000" opacity="0.22"/>
<rect x="567.1" y="318.92" width="8.0" height="8.92" fill="#3810a0"/>
<rect x="567.1" y="327.09" width="8.0" height="0.7" fill="#000" opacity="0.22"/>
<rect x="567.1" y="327.79" width="8.0" height="8.92" fill="#5828b0"/>
<rect x="567.1" y="335.96" width="8.0" height="0.7" fill="#000" opacity="0.22"/>
<rect x="567.1" y="336.66" width="8.0" height="8.92" fill="#4c28a4"/>
<rect x="567.1" y="344.83" width="8.0" height="0.7" fill="#000" opacity="0.22"/>
<rect x="567.1" y="345.53" width="8.0" height="8.92" fill="#3c18a0"/>
<rect x="567.1" y="353.70" width="8.0" height="0.7" fill="#000" opacity="0.22"/>
<rect x="567.1" y="354.40" width="8.0" height="8.92" fill="#3414a0"/>
<rect x="567.1" y="362.57" width="8.0" height="0.7" fill="#000" opacity="0.22"/>
<rect x="567.1" y="363.27" width="8.0" height="8.92" fill="#3010a0"/>
<rect x="567.1" y="371.44" width="8.0" height="0.7" fill="#000" opacity="0.22"/>
<rect x="567.1" y="372.14" width="8.0" height="8.92" fill="#3010a8"/>
<rect x="567.1" y="380.31" width="8.0" height="0.7" fill="#000" opacity="0.22"/>
<rect x="567.1" y="381.01" width="8.0" height="8.92" fill="#3818a8"/>
<rect x="567.1" y="389.18" width="8.0" height="0.7" fill="#000" opacity="0.22"/>
<rect x="567.4" y="391.6" width="7.4" height="6.2" rx="0.8" fill="#f6f5ef"/><path d="M569.4 393.8 L571.1 395.6 L572.8000000000001 393.8" fill="none" stroke="#d4d2c6" stroke-width="1"/>
<path d="M569.5 400.8 V404.8" stroke="#111" stroke-width="0.8"/><path d="M572.9 400.8 L570.3000000000001 402.8 L572.9 404.8 Z" fill="#111"/>
<rect x="579.0" y="63" width="8.2" height="7.4" fill="#1c1c1c"/><rect x="580.2" y="64.2" width="5.8" height="5" fill="#f4f4f0"/><rect x="580.2" y="64.2" width="2.6" height="2.4" fill="#1c1c1c"/><path d="M581.4000000000001 69.2 L585.4000000000001 64.8" stroke="#1c1c1c" stroke-width="0.9"/><rect x="583.6" y="67.2" width="2.4" height="2" fill="#1c1c1c"/>
<rect x="579.0" y="72" width="8.4" height="6" rx="0.8" fill="#c9d8fb"/><path d="M581.3000000000001 76 L583.2 74 L585.1 76" fill="none" stroke="#27408c" stroke-width="1.2"/>
<rect x="578.2" y="79.8" width="10.0" height="310.1" fill="#2a2018"/>
<rect x="578.9000000000001" y="80.5" width="8.6" height="7.2" fill="#fff" stroke="#222" stroke-width="0.7"/><path d="M580.2 81.8 L586.2 86.6 M586.2 81.8 L580.2 86.6" stroke="#1c1c3c" stroke-width="0.85"/>
<rect x="579.2" y="88.80" width="8.0" height="7.87" fill="#e2c4ae"/>
<rect x="578.8000000000001" y="93.67" width="2.5" height="2.5" fill="#fff" stroke="#0c0c0c" stroke-width="0.9"/>
<rect x="579.2" y="97.67" width="8.0" height="7.87" fill="#efe4dc"/>
<rect x="578.8000000000001" y="102.54" width="2.5" height="2.5" fill="#fff" stroke="#0c0c0c" stroke-width="0.9"/>
<rect x="579.2" y="106.54" width="8.0" height="7.87" fill="#f3ebe3"/>
<rect x="578.8000000000001" y="111.41" width="2.5" height="2.5" fill="#fff" stroke="#0c0c0c" stroke-width="0.9"/>
<rect x="579.2" y="115.41" width="8.0" height="7.87" fill="#5a3020"/>
<rect x="578.8000000000001" y="120.28" width="2.5" height="2.5" fill="#fff" stroke="#0c0c0c" stroke-width="0.9"/>
<rect x="579.2" y="124.28" width="8.0" height="7.87" fill="#7a3828"/>
<rect x="578.8000000000001" y="129.15" width="2.5" height="2.5" fill="#fff" stroke="#0c0c0c" stroke-width="0.9"/>
<rect x="579.2" y="133.15" width="8.0" height="7.87" fill="#8b3a2e"/>
<rect x="578.8000000000001" y="138.02" width="2.5" height="2.5" fill="#fff" stroke="#0c0c0c" stroke-width="0.9"/>
<rect x="579.2" y="142.02" width="8.0" height="7.87" fill="#d9a070"/>
<rect x="578.8000000000001" y="146.89" width="2.5" height="2.5" fill="#fff" stroke="#0c0c0c" stroke-width="0.9"/>
<rect x="579.2" y="150.89" width="8.0" height="7.87" fill="#eccca8"/>
<rect x="578.8000000000001" y="155.76" width="2.5" height="2.5" fill="#fff" stroke="#0c0c0c" stroke-width="0.9"/>
<rect x="579.2" y="159.76" width="8.0" height="7.87" fill="#f1dec8"/>
<rect x="578.8000000000001" y="164.63" width="2.5" height="2.5" fill="#fff" stroke="#0c0c0c" stroke-width="0.9"/>
<rect x="579.2" y="168.63" width="8.0" height="7.87" fill="#f3e6d6"/>
<rect x="578.8000000000001" y="173.50" width="2.5" height="2.5" fill="#fff" stroke="#0c0c0c" stroke-width="0.9"/>
<rect x="579.2" y="177.50" width="8.0" height="7.87" fill="#8b3418"/>
<rect x="578.8000000000001" y="182.37" width="2.5" height="2.5" fill="#fff" stroke="#0c0c0c" stroke-width="0.9"/>
<rect x="579.2" y="186.37" width="8.0" height="7.87" fill="#c84420"/>
<rect x="578.8000000000001" y="191.24" width="2.5" height="2.5" fill="#fff" stroke="#0c0c0c" stroke-width="0.9"/>
<rect x="579.2" y="195.24" width="8.0" height="7.87" fill="#e84818"/>
<rect x="578.8000000000001" y="200.11" width="2.5" height="2.5" fill="#fff" stroke="#0c0c0c" stroke-width="0.9"/>
<rect x="579.2" y="204.11" width="8.0" height="7.87" fill="#f2b48c"/>
<rect x="578.8000000000001" y="208.98" width="2.5" height="2.5" fill="#fff" stroke="#0c0c0c" stroke-width="0.9"/>
<rect x="579.2" y="212.98" width="8.0" height="7.87" fill="#f6d4bc"/>
<rect x="578.8000000000001" y="217.85" width="2.5" height="2.5" fill="#fff" stroke="#0c0c0c" stroke-width="0.9"/>
<rect x="579.2" y="221.85" width="8.0" height="7.87" fill="#f5e2d2"/>
<rect x="578.8000000000001" y="226.72" width="2.5" height="2.5" fill="#fff" stroke="#0c0c0c" stroke-width="0.9"/>
<rect x="579.2" y="230.72" width="8.0" height="7.87" fill="#f6e8dc"/>
<rect x="578.8000000000001" y="235.59" width="2.5" height="2.5" fill="#fff" stroke="#0c0c0c" stroke-width="0.9"/>
<rect x="579.2" y="239.59" width="8.0" height="7.87" fill="#a02c30"/>
<rect x="578.8000000000001" y="244.46" width="2.5" height="2.5" fill="#fff" stroke="#0c0c0c" stroke-width="0.9"/>
<rect x="579.2" y="248.46" width="8.0" height="7.87" fill="#b43830"/>
<rect x="578.8000000000001" y="253.33" width="2.5" height="2.5" fill="#fff" stroke="#0c0c0c" stroke-width="0.9"/>
<rect x="579.2" y="257.33" width="8.0" height="7.87" fill="#c84430"/>
<rect x="578.8000000000001" y="262.20" width="2.5" height="2.5" fill="#fff" stroke="#0c0c0c" stroke-width="0.9"/>
<rect x="579.2" y="266.20" width="8.0" height="7.87" fill="#f08c8c"/>
<rect x="578.8000000000001" y="271.07" width="2.5" height="2.5" fill="#fff" stroke="#0c0c0c" stroke-width="0.9"/>
<rect x="579.2" y="275.07" width="8.0" height="7.87" fill="#f4b8b8"/>
<rect x="578.8000000000001" y="279.94" width="2.5" height="2.5" fill="#fff" stroke="#0c0c0c" stroke-width="0.9"/>
<rect x="579.2" y="283.94" width="8.0" height="7.87" fill="#f4c8c8"/>
<rect x="578.8000000000001" y="288.81" width="2.5" height="2.5" fill="#fff" stroke="#0c0c0c" stroke-width="0.9"/>
<rect x="579.2" y="292.81" width="8.0" height="7.87" fill="#f0e0e0"/>
<rect x="578.8000000000001" y="297.68" width="2.5" height="2.5" fill="#fff" stroke="#0c0c0c" stroke-width="0.9"/>
<rect x="579.2" y="301.68" width="8.0" height="7.87" fill="#683020"/>
<rect x="578.8000000000001" y="306.55" width="2.5" height="2.5" fill="#fff" stroke="#0c0c0c" stroke-width="0.9"/>
<rect x="579.2" y="310.55" width="8.0" height="7.87" fill="#9c3828"/>
<rect x="578.8000000000001" y="315.42" width="2.5" height="2.5" fill="#fff" stroke="#0c0c0c" stroke-width="0.9"/>
<rect x="579.2" y="319.42" width="8.0" height="7.87" fill="#b84030"/>
<rect x="578.8000000000001" y="324.29" width="2.5" height="2.5" fill="#fff" stroke="#0c0c0c" stroke-width="0.9"/>
<rect x="579.2" y="328.29" width="8.0" height="7.87" fill="#f0a0a0"/>
<rect x="578.8000000000001" y="333.16" width="2.5" height="2.5" fill="#fff" stroke="#0c0c0c" stroke-width="0.9"/>
<rect x="579.2" y="337.16" width="8.0" height="7.87" fill="#f4c0c6"/>
<rect x="578.8000000000001" y="342.03" width="2.5" height="2.5" fill="#fff" stroke="#0c0c0c" stroke-width="0.9"/>
<rect x="579.2" y="346.03" width="8.0" height="7.87" fill="#f4ccd0"/>
<rect x="578.8000000000001" y="350.90" width="2.5" height="2.5" fill="#fff" stroke="#0c0c0c" stroke-width="0.9"/>
<rect x="579.2" y="354.90" width="8.0" height="7.87" fill="#f6dcdc"/>
<rect x="578.8000000000001" y="359.77" width="2.5" height="2.5" fill="#fff" stroke="#0c0c0c" stroke-width="0.9"/>
<rect x="579.2" y="363.77" width="8.0" height="7.87" fill="#6c2820"/>
<rect x="578.8000000000001" y="368.64" width="2.5" height="2.5" fill="#fff" stroke="#0c0c0c" stroke-width="0.9"/>
<rect x="579.2" y="372.64" width="8.0" height="7.87" fill="#a84840"/>
<rect x="578.8000000000001" y="377.51" width="2.5" height="2.5" fill="#fff" stroke="#0c0c0c" stroke-width="0.9"/>
<rect x="579.2" y="381.51" width="8.0" height="7.87" fill="#c86060"/>
<rect x="578.8000000000001" y="386.38" width="2.5" height="2.5" fill="#fff" stroke="#0c0c0c" stroke-width="0.9"/>
<rect x="579.0" y="391.6" width="8.4" height="6.2" rx="0.8" fill="#c9d8fb"/><path d="M581.3000000000001 393.6 L583.2 395.6 L585.1 393.6" fill="none" stroke="#27408c" stroke-width="1.2"/>
<path d="M581.6 400.8 V404.8" stroke="#111" stroke-width="0.8"/><path d="M585.0 400.8 L582.4000000000001 402.8 L585.0 404.8 Z" fill="#111"/>
<rect x="590.5" y="63" width="8.0" height="7.4" fill="#1c1c1c"/><rect x="591.7" y="64.2" width="5.6000000000000005" height="5" fill="#f4f4f0"/><rect x="591.7" y="64.2" width="2.6" height="2.4" fill="#1c1c1c"/><path d="M592.9000000000001 69.2 L596.7 64.8" stroke="#1c1c1c" stroke-width="0.9"/><rect x="594.9" y="67.2" width="2.4" height="2" fill="#1c1c1c"/>
<rect x="590.5" y="72" width="8.200000000000001" height="6" rx="0.8" fill="#c9d8fb"/><path d="M592.7 76 L594.6 74 L596.5 76" fill="none" stroke="#27408c" stroke-width="1.2"/>
<rect x="589.5" y="79.8" width="10.200000000000001" height="310.1" fill="#4a4440"/>
<rect x="590.4000000000001" y="80.5" width="8.4" height="7.2" fill="#fff" stroke="#222" stroke-width="0.7"/><path d="M591.7 81.8 L597.5 86.6 M597.5 81.8 L591.7 86.6" stroke="#1c1c3c" stroke-width="0.85"/>
<rect x="590.2" y="88.30" width="8.8" height="8.92" fill="#f5cf90"/>
<rect x="590.2" y="96.47" width="8.8" height="0.7" fill="#000" opacity="0.22"/>
<rect x="590.2" y="97.17" width="8.8" height="8.92" fill="#6b4a32"/>
<rect x="590.2" y="105.34" width="8.8" height="0.7" fill="#000" opacity="0.22"/>
<rect x="590.2" y="106.04" width="8.8" height="8.92" fill="#9a4b32"/>
<rect x="590.2" y="114.21" width="8.8" height="0.7" fill="#000" opacity="0.22"/>
<rect x="590.2" y="114.91" width="8.8" height="8.92" fill="#e2703a"/>
<rect x="590.2" y="123.08" width="8.8" height="0.7" fill="#000" opacity="0.22"/>
<rect x="590.2" y="123.78" width="8.8" height="8.92" fill="#f58a4e"/>
<rect x="590.2" y="131.95" width="8.8" height="0.7" fill="#000" opacity="0.22"/>
<rect x="590.2" y="132.65" width="8.8" height="8.92" fill="#f9a070"/>
<rect x="590.2" y="140.82" width="8.8" height="0.7" fill="#000" opacity="0.22"/>
<rect x="590.2" y="141.52" width="8.8" height="8.92" fill="#f9d5be"/>
<rect x="590.2" y="149.69" width="8.8" height="0.7" fill="#000" opacity="0.22"/>
<rect x="590.2" y="150.39" width="8.8" height="8.92" fill="#b4645a"/>
<rect x="590.2" y="158.56" width="8.8" height="0.7" fill="#000" opacity="0.22"/>
<rect x="590.2" y="159.26" width="8.8" height="8.92" fill="#e07068"/>
<rect x="590.2" y="167.43" width="8.8" height="0.7" fill="#000" opacity="0.22"/>
<rect x="590.2" y="168.13" width="8.8" height="8.92" fill="#e0607c"/>
<rect x="590.2" y="176.30" width="8.8" height="0.7" fill="#000" opacity="0.22"/>
<rect x="590.2" y="177.00" width="8.8" height="8.92" fill="#ee2830"/>
<rect x="590.2" y="185.17" width="8.8" height="0.7" fill="#000" opacity="0.22"/>
<rect x="590.2" y="185.87" width="8.8" height="8.92" fill="#f5543c"/>
<rect x="590.2" y="194.04" width="8.8" height="0.7" fill="#000" opacity="0.22"/>
<rect x="590.2" y="194.74" width="8.8" height="8.92" fill="#f4605c"/>
<rect x="590.2" y="202.91" width="8.8" height="0.7" fill="#000" opacity="0.22"/>
<rect x="590.2" y="203.61" width="8.8" height="8.92" fill="#d89090"/>
<rect x="590.2" y="211.78" width="8.8" height="0.7" fill="#000" opacity="0.22"/>
<rect x="590.2" y="212.48" width="8.8" height="8.92" fill="#885064"/>
<rect x="590.2" y="220.65" width="8.8" height="0.7" fill="#000" opacity="0.22"/>
<rect x="590.2" y="221.35" width="8.8" height="8.92" fill="#b84c78"/>
<rect x="590.2" y="229.52" width="8.8" height="0.7" fill="#000" opacity="0.22"/>
<rect x="590.2" y="230.22" width="8.8" height="8.92" fill="#f4a8cc"/>
<rect x="590.2" y="238.39" width="8.8" height="0.7" fill="#000" opacity="0.22"/>
<rect x="590.2" y="239.09" width="8.8" height="8.92" fill="#dc78a4"/>
<rect x="590.2" y="247.26" width="8.8" height="0.7" fill="#000" opacity="0.22"/>
<rect x="590.2" y="247.96" width="8.8" height="8.92" fill="#d898b8"/>
<rect x="590.2" y="256.13" width="8.8" height="0.7" fill="#000" opacity="0.22"/>
<rect x="590.2" y="256.83" width="8.8" height="8.92" fill="#ecc0d4"/>
<rect x="590.2" y="265.00" width="8.8" height="0.7" fill="#000" opacity="0.22"/>
<rect x="590.2" y="265.70" width="8.8" height="8.92" fill="#c460a4"/>
<rect x="590.2" y="273.87" width="8.8" height="0.7" fill="#000" opacity="0.22"/>
<rect x="590.2" y="274.57" width="8.8" height="8.92" fill="#e0409c"/>
<rect x="590.2" y="282.74" width="8.8" height="0.7" fill="#000" opacity="0.22"/>
<rect x="590.2" y="283.44" width="8.8" height="8.92" fill="#d858a8"/>
<rect x="590.2" y="291.61" width="8.8" height="0.7" fill="#000" opacity="0.22"/>
<rect x="590.2" y="292.31" width="8.8" height="8.92" fill="#c070b8"/>
<rect x="590.2" y="300.48" width="8.8" height="0.7" fill="#000" opacity="0.22"/>
<rect x="590.2" y="301.18" width="8.8" height="8.92" fill="#e090d0"/>
<rect x="590.2" y="309.35" width="8.8" height="0.7" fill="#000" opacity="0.22"/>
<rect x="590.2" y="310.05" width="8.8" height="8.92" fill="#804870"/>
<rect x="590.2" y="318.22" width="8.8" height="0.7" fill="#000" opacity="0.22"/>
<rect x="590.2" y="318.92" width="8.8" height="8.92" fill="#a05090"/>
<rect x="590.2" y="327.09" width="8.8" height="0.7" fill="#000" opacity="0.22"/>
<rect x="590.2" y="327.79" width="8.8" height="8.92" fill="#b860c0"/>
<rect x="590.2" y="335.96" width="8.8" height="0.7" fill="#000" opacity="0.22"/>
<rect x="590.2" y="336.66" width="8.8" height="8.92" fill="#c02080"/>
<rect x="590.2" y="344.83" width="8.8" height="0.7" fill="#000" opacity="0.22"/>
<rect x="590.2" y="345.53" width="8.8" height="8.92" fill="#a030a0"/>
<rect x="590.2" y="353.70" width="8.8" height="0.7" fill="#000" opacity="0.22"/>
<rect x="590.2" y="354.40" width="8.8" height="8.92" fill="#8038b0"/>
<rect x="590.2" y="362.57" width="8.8" height="0.7" fill="#000" opacity="0.22"/>
<rect x="590.2" y="363.27" width="8.8" height="8.92" fill="#703880"/>
<rect x="590.2" y="371.44" width="8.8" height="0.7" fill="#000" opacity="0.22"/>
<rect x="590.2" y="372.14" width="8.8" height="8.92" fill="#7028a0"/>
<rect x="590.2" y="380.31" width="8.8" height="0.7" fill="#000" opacity="0.22"/>
<rect x="590.2" y="381.01" width="8.8" height="8.92" fill="#101010"/>
<rect x="590.2" y="389.18" width="8.8" height="0.7" fill="#000" opacity="0.22"/>
<rect x="590.5" y="391.6" width="8.200000000000001" height="6.2" rx="0.8" fill="#f6f5ef"/><path d="M592.9 393.8 L594.6 395.6 L596.3000000000001 393.8" fill="none" stroke="#d4d2c6" stroke-width="1"/>
<path d="M593.0 400.8 V404.8" stroke="#111" stroke-width="0.8"/><path d="M596.4 400.8 L593.8000000000001 402.8 L596.4 404.8 Z" fill="#111"/>
<rect x="542.1" y="390.4" width="0.6" height="19" fill="#dddacb"/><rect x="542.6999999999999" y="390.4" width="0.5" height="19" fill="#fff"/>
<rect x="553.9000000000001" y="390.4" width="0.6" height="19" fill="#dddacb"/><rect x="554.5" y="390.4" width="0.5" height="19" fill="#fff"/>
<rect x="565.6" y="390.4" width="0.6" height="19" fill="#dddacb"/><rect x="566.1999999999999" y="390.4" width="0.5" height="19" fill="#fff"/>
<rect x="576.9000000000001" y="390.4" width="0.6" height="19" fill="#dddacb"/><rect x="577.5" y="390.4" width="0.5" height="19" fill="#fff"/>
<rect x="588.5" y="390.4" width="0.6" height="19" fill="#dddacb"/><rect x="589.0999999999999" y="390.4" width="0.5" height="19" fill="#fff"/>
<rect x="567.1" y="88.70" width="8.0" height="8.07" fill="none" stroke="#2a2a2a" stroke-width="1"/><rect x="568.1" y="89.70" width="6.0" height="6.07" fill="none" stroke="#f7ec60" stroke-width="0.8"/>
<rect x="590.2" y="230.62" width="8.8" height="8.07" fill="none" stroke="#2a2a2a" stroke-width="1"/><rect x="591.2" y="231.62" width="6.800000000000001" height="6.07" fill="none" stroke="#fbd2e4" stroke-width="0.8"/>
<rect x="555.7" y="345.93" width="9.0" height="8.07" fill="none" stroke="#2a2a2a" stroke-width="1"/><rect x="556.7" y="346.93" width="7.0" height="6.07" fill="none" stroke="#f88ab4" stroke-width="0.8"/>
<rect x="532.3" y="133.05" width="8.9" height="8.07" fill="none" stroke="#2a2a2a" stroke-width="1"/><rect x="533.3" y="134.05" width="6.9" height="6.07" fill="none" stroke="#8fe0d0" stroke-width="0.8"/>
<rect x="578.7" y="292.71" width="9.0" height="8.07" fill="none" stroke="#2a2a2a" stroke-width="1"/><rect x="579.7" y="293.71" width="7.0" height="6.07" fill="none" stroke="#fff" stroke-width="0.8"/>
</svg>
<svg class="status" style="position:absolute;left:0px;top:410px" width="600" height="23" viewBox="0 410 600 23">
<rect x="0" y="410" width="600" height="0.8" fill="#fbfaf4"/>
<text x="2" y="419.4" font-size="6.2" fill="#000" textLength="33" lengthAdjust="spacingAndGlyphs" stroke="#000" stroke-width="0.12">选定的节点:</text>
<text x="38" y="419.4" font-size="6" fill="#000" textLength="10.6" lengthAdjust="spacingAndGlyphs" stroke="#000" stroke-width="0.12">线条</text>
<text x="51" y="419.4" font-size="6.2" fill="#000" textLength="12" lengthAdjust="spacingAndGlyphs" stroke="#000" stroke-width="0.12">尖突</text>
<text x="64.4" y="419.2" font-size="6.2" fill="#000" textLength="46.6" lengthAdjust="spacingAndGlyphs">(120.280, 95.325)</text>
<text x="210.8" y="419.4" font-size="6" fill="#000" textLength="38" lengthAdjust="spacingAndGlyphs" stroke="#000" stroke-width="0.12">曲线: 8 个节点</text>
<text x="2" y="430" font-size="6.2" fill="#000" textLength="50" lengthAdjust="spacingAndGlyphs">( 164.344, 97.011 )</text>
<text x="62.8" y="430.2" font-size="6.2" fill="#000" textLength="45.2" lengthAdjust="spacingAndGlyphs" stroke="#000" stroke-width="0.12">下次单击为编辑;</text>
<text x="111" y="430.2" font-size="6.2" fill="#000" textLength="39" lengthAdjust="spacingAndGlyphs" stroke="#000" stroke-width="0.12">再点拖动/缩放;</text>
<text x="153" y="430.2" font-size="6.2" fill="#000" textLength="36" lengthAdjust="spacingAndGlyphs" stroke="#000" stroke-width="0.12">双击全选对象;</text>
<text x="191.7" y="430.2" font-size="6" fill="#000" textLength="91" lengthAdjust="spacingAndGlyphs">Shift+单击多选; Alt+单击选择</text>
<text x="285" y="430.2" font-size="6.2" fill="#000" textLength="32" lengthAdjust="spacingAndGlyphs" stroke="#000" stroke-width="0.12">后面的对象</text>
<rect x="220.8" y="421.6" width="63.6" height="11" fill="#2c2c2c"/>
<rect x="220.4" y="421.2" width="63" height="10.2" fill="#d9d8d2" stroke="#f6f6f2" stroke-width="0.5"/>
<rect x="222.8" y="422.8" width="6.2" height="7.2" fill="#27348f"/><path d="M223.3 429.4 L225.9 423.6 L228.5 429.4 Z" fill="#e2322c"/><rect x="225" y="426.4" width="1.8" height="3" fill="#fff"/>
<rect x="231.4" y="422" width="20.2" height="8.8" fill="#e3e2dc"/><path d="M231.4 430.8 V422 H251.6" fill="none" stroke="#fbfbf8" stroke-width="0.6"/><path d="M231.4 430.8 H251.6 V422" fill="none" stroke="#4c4c4c" stroke-width="0.7"/>
<text x="234.6" y="430" font-size="7.4" fill="#000" textLength="15.2" lengthAdjust="spacingAndGlyphs" font-weight="bold">标准</text>
<rect x="252.4" y="422" width="9.4" height="8.8" fill="#e3e2dc"/><path d="M252.4 430.8 V422 H261.8" fill="none" stroke="#fbfbf8" stroke-width="0.6"/><path d="M252.4 430.8 H261.8 V422" fill="none" stroke="#4c4c4c" stroke-width="0.7"/>
<path d="M259.6 423.4 A3.3 3.3 0 1 0 259.9 429.4 A3.3 3.3 0 0 1 256 426 A3.3 3.3 0 0 1 259.6 423.4 Z" fill="#111"/><circle cx="257.4" cy="427.2" r="2.4" fill="#111"/><circle cx="259.4" cy="425.4" r="1.7" fill="#e3e2dc"/>
<rect x="262.8" y="422" width="8.6" height="8.8" fill="#e3e2dc"/><path d="M262.8 430.8 V422 H271.40000000000003" fill="none" stroke="#fbfbf8" stroke-width="0.6"/><path d="M262.8 430.8 H271.40000000000003 V422" fill="none" stroke="#4c4c4c" stroke-width="0.7"/>
<rect x="265.2" y="426.4" width="1.3" height="1.3" fill="#111"/><rect x="267.8" y="426.4" width="1.3" height="1.8" fill="#111"/>
<rect x="272.8" y="422" width="10" height="8.8" fill="#e3e2dc"/><path d="M272.8 430.8 V422 H282.8" fill="none" stroke="#fbfbf8" stroke-width="0.6"/><path d="M272.8 430.8 H282.8 V422" fill="none" stroke="#4c4c4c" stroke-width="0.7"/>
<rect x="274.2" y="424.6" width="7.2" height="4.2" fill="#c9c8c2" stroke="#444" stroke-width="0.5"/><path d="M275 426 H280.6 M275 427.4 H280.6" stroke="#555" stroke-width="0.5" stroke-dasharray="0.8 0.6"/>
<path d="M493 419 L492 415.4 L494.8 412.4 L497.6 415 L495.4 419 Z" fill="#dfe4f6" stroke="#17174a" stroke-width="0.7"/><path d="M497.6 415 C498.8 416.4 498.6 418 498 418.8" stroke="#17174a" stroke-width="0.7" fill="none"/>
<text x="501.6" y="418.7" font-size="6.3" fill="#000" textLength="76.6" lengthAdjust="spacingAndGlyphs">100% PANTONE Green 0921 U</text>
<rect x="579.2" y="412.4" width="16" height="7.6" fill="#36c6ad"/>
<rect x="579.2" y="416.8" width="2.2" height="2.6" fill="#fff" stroke="#111" stroke-width="0.5"/>
<path d="M493.6 431 V425.4 C493.6 423 497 423 497 425.4 V431 Z" fill="#fff" stroke="#17174a" stroke-width="0.7"/><path d="M495.3 423.6 V427.4" stroke="#17174a" stroke-width="0.6"/>
<text x="501.4" y="429.6" font-size="6.3" fill="#000" textLength="14" lengthAdjust="spacingAndGlyphs">Black</text>
<text x="517.2" y="429.9" font-size="6.4" fill="#000" textLength="11.8" lengthAdjust="spacingAndGlyphs">细线</text>
<rect x="579.2" y="423.4" width="16" height="7.4" fill="#161414"/>
</svg>
<svg class="taskbar" style="position:absolute;left:0px;top:433px" width="600" height="15" viewBox="0 433 600 15">
<path d="M7.4 437.2 C8.8 436.4 10 436.6 11 437.2 L10.4 440.4 C9.4 439.8 8.2 439.8 6.8 440.4 Z" fill="#e8502a"/><path d="M11.8 437.4 C13 438 14.2 438 15.6 437.2 L15 440.4 C13.6 441.2 12.4 441 11.2 440.6 Z" fill="#7ac043"/><path d="M6.6 441.2 C8 440.6 9.2 440.8 10.2 441.4 L9.6 444.6 C8.6 444 7.4 444 6 444.6 Z" fill="#3b8ae6"/><path d="M11 441.6 C12.2 442.2 13.4 442.2 14.8 441.4 L14.2 444.6 C12.8 445.4 11.6 445.2 10.4 444.8 Z" fill="#f7c325"/>
<text x="20.8" y="444.8" font-size="9" fill="#fff" textLength="18.8" lengthAdjust="spacingAndGlyphs" font-weight="500" font-style="italic" opacity="0.95">开始</text>
<circle cx="61" cy="440.6" r="3.2" fill="#dbe9ff" stroke="#2a68c8" stroke-width="0.8"/><path d="M59 441 H63.4" stroke="#2a68c8" stroke-width="0.9"/>
<path d="M69 443.4 L72.6 437 L76.6 439.4 L73.4 444.4 Z" fill="#f4c430" stroke="#b86a10" stroke-width="0.6"/>
<circle cx="85.6" cy="440.6" r="3.3" fill="#eef4ff" stroke="#1b4bb0" stroke-width="0.8"/><path d="M84.6 439 V442.4 L87.4 440.7 Z" fill="#1b4bb0"/>
<text x="95.4" y="441.6" font-size="6" fill="#fff" font-weight="bold">»</text>
<rect x="104.8" y="434.4" width="80.6" height="12.6" rx="1.4" fill="#1d4eb4" stroke="#143c94" stroke-width="0.6"/>
<rect x="108" y="436.4" width="7" height="8" fill="#fff" stroke="#9ab" stroke-width="0.4"/><rect x="109" y="437.4" width="3" height="3" fill="#2a9a4a"/><rect x="111.4" y="440.4" width="2.6" height="3" fill="#d33"/>
<text x="119.4" y="443.4" font-size="6.6" fill="#fff" textLength="58" lengthAdjust="spacingAndGlyphs" font-weight="bold" class="mono">CorelDRAW 12 - [...</text>
<rect x="187.6" y="434.4" width="79.4" height="12.6" rx="1.4" fill="#3b80f1" stroke="#2a62cf" stroke-width="0.6"/>
<rect x="190.6" y="436.6" width="7.4" height="7.6" fill="#dfe8f8" stroke="#35569a" stroke-width="0.5"/><circle cx="194.2" cy="440.2" r="1.8" fill="#3565c0"/>
<text x="202" y="443.4" font-size="6.6" fill="#fff" textLength="47" lengthAdjust="spacingAndGlyphs" font-weight="bold" class="mono">Adobe Photoshop</text>
<rect x="270" y="434.4" width="81.6" height="12.6" rx="1.4" fill="#3b80f1" stroke="#2a62cf" stroke-width="0.6"/>
<circle cx="278.4" cy="440.6" r="3.4" fill="#fff" stroke="#2456b8" stroke-width="0.7"/><path d="M277.4 438.8 V442.4 L280.4 440.6 Z" fill="#2456b8"/>
<text x="285.6" y="443.4" font-size="6.6" fill="#fff" textLength="57.6" lengthAdjust="spacingAndGlyphs" font-weight="bold" class="mono">Windows Media Pl...</text>
<rect x="521.8" y="436.6" width="6.4" height="8" fill="#f6d84a" stroke="#a88a1a" stroke-width="0.4"/><path d="M524.4 444.4 V438.8 H527.6 V444.4" fill="#d8322a"/>
<rect x="533.2" y="436.8" width="6.8" height="7.6" fill="#fff" stroke="#333" stroke-width="0.5"/>
<text x="534.8" y="443.2" font-size="6.4" fill="#111" font-weight="bold">?</text>
<path d="M549.2 436.8 C551.4 436.8 551.4 439.6 549.2 440.4 V442" stroke="#fff" stroke-width="1" fill="none"/><circle cx="549.2" cy="444.2" r="0.8" fill="#fff"/>
<circle cx="559.5" cy="440.8" r="3.8" fill="#3a9cf2" stroke="#cfe8ff" stroke-width="0.7"/><path d="M560.5 438.6 L558.3 440.8 L560.5 443" fill="none" stroke="#fff" stroke-width="1.1"/>
<circle cx="569" cy="440.8" r="3.6" fill="#182a6a" stroke="#9cc8f4" stroke-width="0.5"/><path d="M566.8 441 C567.6 438.6 570.4 438.6 570.8 440.4 C570.4 442 568.6 442 568.4 440.8" stroke="#f0f6ff" stroke-width="0.9" fill="none"/>
<text x="577.4" y="444" font-size="6.6" fill="#d8f0ff" textLength="15.2" lengthAdjust="spacingAndGlyphs" class="mono">16:03</text>
</svg>
<svg class="footer" style="position:absolute;left:0px;top:448px" width="600" height="12" viewBox="0 448 600 12">
<text x="5" y="457" font-size="7.4" fill="#fff" textLength="176.6" lengthAdjust="spacingAndGlyphs" class="mono">Powered By www.chahua.org alexi Submitted Jun 2005</text>
</svg>
</div>
</body>
</html>
